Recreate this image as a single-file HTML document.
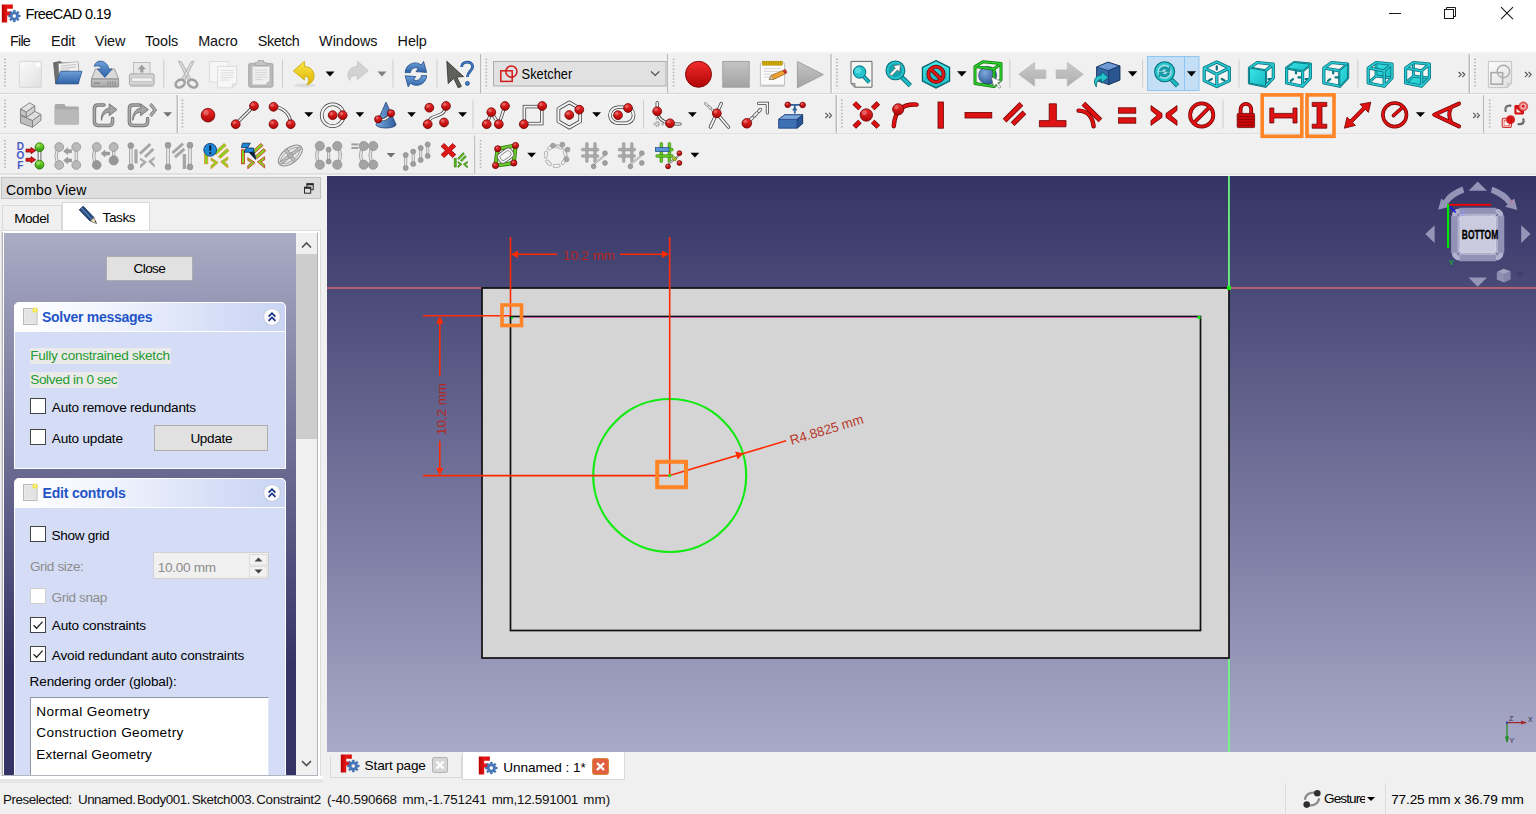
<!DOCTYPE html>
<html>
<head>
<meta charset="utf-8">
<title>FreeCAD 0.19</title>
<style>
*{box-sizing:border-box;margin:0;padding:0}
html,body{width:1536px;height:814px;overflow:hidden;background:#f0f0f0;font-family:"Liberation Sans",sans-serif;color:#000}
.abs{position:absolute}
#titlebar{position:absolute;left:0;top:0;width:1536px;height:28px;background:#fff}
#menubar{position:absolute;left:0;top:28px;width:1536px;height:25px;background:#fff}
.menu{position:absolute;top:4px;font-size:15px;line-height:17px;white-space:nowrap}
#toolbars{position:absolute;left:0;top:53px;width:1536px;height:123px;background:#f0f0f0}
.tbsep{position:absolute;width:1px;background:#c9c9c9}
.hsep{position:absolute;height:1px;background:#d4d4d4}
.handle{position:absolute;width:2px;height:30px;background:repeating-linear-gradient(to bottom,#b4b4b4 0,#b4b4b4 1px,transparent 1px,transparent 3px)}
.ic{position:absolute;width:32px;height:32px;overflow:visible}
.dd{position:absolute;width:0;height:0;border-left:4.5px solid transparent;border-right:4.5px solid transparent;border-top:5px solid #000}
.dd.g{border-top-color:#7f7f7f}
.chev{position:absolute;font-size:13px;color:#555;letter-spacing:-2px}
#viewport{position:absolute;left:327px;top:176px;width:1209px;height:576px;background:linear-gradient(to bottom,#333365 0%,#a9a9c9 100%);overflow:hidden}
#left{position:absolute;left:0;top:176px;width:323px;height:606px;background:#f0f0f0}
#status{position:absolute;left:0;top:783px;width:1536px;height:31px;background:#f0f0f0;font-size:14px}
.t{position:absolute;white-space:nowrap}
</style>
</head>
<body>
<svg width="0" height="0" style="position:absolute"><defs>
<linearGradient id="fcred" x1="0" y1="0" x2="1" y2="0"><stop offset="0" stop-color="#b80000"/><stop offset="0.5" stop-color="#e81818"/><stop offset="1" stop-color="#d40808"/></linearGradient>
<symbol id="fc" viewBox="0 0 20 20"><path d="M0.8,0.5 H11.8 V4.8 H6.2 V7.4 H10.2 V11.6 H6.2 V18.4 H0.8Z" fill="url(#fcred)"/><path fill-rule="evenodd" d="M19.31,10.95 L19.31,13.05 L17.56,13.09 L17.09,14.24 L18.29,15.51 L16.81,16.99 L15.54,15.79 L14.39,16.26 L14.35,18.01 L12.25,18.01 L12.21,16.26 L11.06,15.79 L9.79,16.99 L8.31,15.51 L9.51,14.24 L9.04,13.09 L7.29,13.05 L7.29,10.95 L9.04,10.91 L9.51,9.76 L8.31,8.49 L9.79,7.01 L11.06,8.21 L12.21,7.74 L12.25,5.99 L14.35,5.99 L14.39,7.74 L15.54,8.21 L16.81,7.01 L18.29,8.49 L17.09,9.76 L17.56,10.91Z M11.40,12.00 a1.90,1.90 0 1,0 3.80,0 a1.90,1.90 0 1,0 -3.80,0Z" fill="#4577bb" stroke="#2f5894" stroke-width="0.3"/></symbol>
</defs></svg>
<div id="titlebar"><svg class="abs" style="left:1px;top:3.9px" width="20" height="20"><use href="#fc"/></svg>
<div class="t" style="left:25.40px;top:6.75px;font-size:14.60px;line-height:14.60px;color:#000;letter-spacing:-0.659px;">FreeCAD 0.19</div>
<svg class="abs" style="left:1380px;top:0" width="156" height="28" viewBox="1380 0 156 28" fill="none" stroke="#1a1a1a" stroke-width="1">
<line x1="1389" y1="13.5" x2="1401" y2="13.5"/>
<path d="M1446.5,9.5 V7.5 H1455.5 V16.5 H1453.5"/><rect x="1444.5" y="9.5" width="9" height="9"/>
<path d="M1501,7.2 L1513,19.2 M1513,7.2 L1501,19.2" stroke-width="1.1"/>
</svg></div>
<div id="menubar" style="background:linear-gradient(to bottom,#fff 0,#fff 23px,#f4f4f4 25px)">
<div class="t" style="left:10.00px;top:5.85px;font-size:14.40px;line-height:14.40px;color:#111;letter-spacing:-0.776px;">File</div>
<div class="t" style="left:51.00px;top:5.85px;font-size:14.40px;line-height:14.40px;color:#111;letter-spacing:-0.203px;">Edit</div>
<div class="t" style="left:94.80px;top:5.85px;font-size:14.40px;line-height:14.40px;color:#111;letter-spacing:-0.138px;">View</div>
<div class="t" style="left:144.90px;top:5.85px;font-size:14.40px;line-height:14.40px;color:#111;letter-spacing:-0.063px;">Tools</div>
<div class="t" style="left:198.20px;top:5.85px;font-size:14.40px;line-height:14.40px;color:#111;letter-spacing:-0.081px;">Macro</div>
<div class="t" style="left:257.80px;top:5.85px;font-size:14.40px;line-height:14.40px;color:#111;letter-spacing:-0.420px;">Sketch</div>
<div class="t" style="left:319.10px;top:5.85px;font-size:14.40px;line-height:14.40px;color:#111;">Windows</div>
<div class="t" style="left:397.60px;top:5.85px;font-size:14.40px;line-height:14.40px;color:#111;letter-spacing:-0.104px;">Help</div>
</div>
<div id="toolbars"><svg class="abs" style="left:0;top:0" width="1536" height="123" viewBox="0 53 1536 123" font-family="Liberation Sans, sans-serif">
<defs>
<linearGradient id="gRed" x1="0" y1="0" x2="0" y2="1"><stop offset="0" stop-color="#f22c2c"/><stop offset="1" stop-color="#b00505"/></linearGradient>
<linearGradient id="gRedH" x1="0" y1="0" x2="1" y2="1"><stop offset="0" stop-color="#ee2222"/><stop offset="1" stop-color="#c00808"/></linearGradient>
<linearGradient id="gTeal" x1="0" y1="0" x2="0" y2="1"><stop offset="0" stop-color="#3fe6e8"/><stop offset="1" stop-color="#0aa3ad"/></linearGradient>
<linearGradient id="gTealF" x1="0" y1="0" x2="1" y2="1"><stop offset="0" stop-color="#3ae4e6"/><stop offset="1" stop-color="#17bcc4"/></linearGradient>
<linearGradient id="gGray" x1="0" y1="0" x2="0" y2="1"><stop offset="0" stop-color="#c4c4c4"/><stop offset="1" stop-color="#a3a3a3"/></linearGradient>
<linearGradient id="gPaper" x1="0" y1="0" x2="1" y2="1"><stop offset="0" stop-color="#fdfdfd"/><stop offset="1" stop-color="#dedede"/></linearGradient>
<linearGradient id="gBlue" x1="0" y1="0" x2="0" y2="1"><stop offset="0" stop-color="#6fa0d8"/><stop offset="1" stop-color="#2f63a8"/></linearGradient>
<linearGradient id="gBlueH" x1="0" y1="0" x2="1" y2="0"><stop offset="0" stop-color="#7aaae0"/><stop offset="1" stop-color="#2d5c9c"/></linearGradient>
<linearGradient id="gYel" x1="0" y1="0" x2="0" y2="1"><stop offset="0" stop-color="#fbe84c"/><stop offset="1" stop-color="#e0b400"/></linearGradient>
<linearGradient id="gGreen" x1="0" y1="0" x2="0" y2="1"><stop offset="0" stop-color="#8ae234"/><stop offset="1" stop-color="#2f9a0c"/></linearGradient>
<radialGradient id="gSph" cx="0.35" cy="0.35" r="0.8"><stop offset="0" stop-color="#7fa8dc"/><stop offset="1" stop-color="#1d4a8c"/></radialGradient>
</defs>
<rect x="0" y="93" width="1536" height="1" fill="#d6d6d6"/><rect x="0" y="94" width="1536" height="1" fill="#fafafa"/>
<rect x="0" y="133.4" width="1536" height="1" fill="#d6d6d6"/><rect x="0" y="134.4" width="1536" height="1" fill="#fafafa"/>
<rect x="0" y="173.6" width="1536" height="1" fill="#c8c8c8"/><rect x="0" y="174.6" width="1536" height="1.4" fill="#f6f6f6"/>
<rect x="480.0" y="54.0" width="1.4" height="39.0" fill="#b9b9b9"/><rect x="481.4" y="54.0" width="1" height="39.0" fill="#fbfbfb"/>
<rect x="667.0" y="54.0" width="1.4" height="39.0" fill="#b9b9b9"/><rect x="668.4" y="54.0" width="1" height="39.0" fill="#fbfbfb"/>
<rect x="830.4" y="54.0" width="1.4" height="39.0" fill="#b9b9b9"/><rect x="831.8" y="54.0" width="1" height="39.0" fill="#fbfbfb"/>
<rect x="1468.6" y="54.0" width="1.4" height="39.0" fill="#b9b9b9"/><rect x="1470.0" y="54.0" width="1" height="39.0" fill="#fbfbfb"/>
<line x1="5.0" y1="58.5" x2="5.0" y2="88.5" stroke="#b5b5b5" stroke-width="1.6" stroke-dasharray="1.5,1.8"/>
<line x1="486.3" y1="58.5" x2="486.3" y2="88.5" stroke="#b5b5b5" stroke-width="1.6" stroke-dasharray="1.5,1.8"/>
<line x1="673.5" y1="58.5" x2="673.5" y2="88.5" stroke="#b5b5b5" stroke-width="1.6" stroke-dasharray="1.5,1.8"/>
<line x1="837.0" y1="58.5" x2="837.0" y2="88.5" stroke="#b5b5b5" stroke-width="1.6" stroke-dasharray="1.5,1.8"/>
<line x1="1475.0" y1="58.5" x2="1475.0" y2="88.5" stroke="#b5b5b5" stroke-width="1.6" stroke-dasharray="1.5,1.8"/>
<rect x="163.3" y="59.5" width="1" height="28.0" fill="#cbcbcb"/>
<rect x="282.0" y="59.5" width="1" height="28.0" fill="#cbcbcb"/>
<rect x="392.5" y="59.5" width="1" height="28.0" fill="#cbcbcb"/>
<rect x="436.5" y="59.5" width="1" height="28.0" fill="#cbcbcb"/>
<rect x="1009.3" y="59.5" width="1" height="28.0" fill="#cbcbcb"/>
<rect x="1142.2" y="59.5" width="1" height="28.0" fill="#cbcbcb"/>
<rect x="1238.5" y="59.5" width="1" height="28.0" fill="#cbcbcb"/>
<rect x="1357.3" y="59.5" width="1" height="28.0" fill="#cbcbcb"/>
<rect x="176.6" y="95.0" width="1.4" height="38.0" fill="#b9b9b9"/><rect x="178.0" y="95.0" width="1" height="38.0" fill="#fbfbfb"/>
<rect x="835.6" y="95.0" width="1.4" height="38.0" fill="#b9b9b9"/><rect x="837.0" y="95.0" width="1" height="38.0" fill="#fbfbfb"/>
<rect x="1483.0" y="95.0" width="1.4" height="38.0" fill="#b9b9b9"/><rect x="1484.4" y="95.0" width="1" height="38.0" fill="#fbfbfb"/>
<line x1="5.0" y1="99.5" x2="5.0" y2="129.0" stroke="#b5b5b5" stroke-width="1.6" stroke-dasharray="1.5,1.8"/>
<line x1="182.5" y1="99.5" x2="182.5" y2="129.0" stroke="#b5b5b5" stroke-width="1.6" stroke-dasharray="1.5,1.8"/>
<line x1="841.8" y1="99.5" x2="841.8" y2="129.0" stroke="#b5b5b5" stroke-width="1.6" stroke-dasharray="1.5,1.8"/>
<line x1="1489.7" y1="99.5" x2="1489.7" y2="129.0" stroke="#b5b5b5" stroke-width="1.6" stroke-dasharray="1.5,1.8"/>
<rect x="472.5" y="100.5" width="1" height="28.0" fill="#cbcbcb"/>
<rect x="643.0" y="100.5" width="1" height="28.0" fill="#cbcbcb"/>
<rect x="1222.5" y="100.5" width="1" height="28.0" fill="#cbcbcb"/>
<rect x="474.2" y="135.5" width="1.4" height="38.0" fill="#b9b9b9"/><rect x="475.6" y="135.5" width="1" height="38.0" fill="#fbfbfb"/>
<rect x="475.6" y="135.5" width="1061" height="38" fill="#f0f0f0"/>
<line x1="5.0" y1="140.0" x2="5.0" y2="169.5" stroke="#b5b5b5" stroke-width="1.6" stroke-dasharray="1.5,1.8"/>
<line x1="480.5" y1="140.0" x2="480.5" y2="169.5" stroke="#b5b5b5" stroke-width="1.6" stroke-dasharray="1.5,1.8"/>
<polygon points="325.5,71.5 334.5,71.5 330.0,76.5" fill="#000"/>
<polygon points="377.5,71.5 386.5,71.5 382.0,76.5" fill="#808080"/>
<polygon points="957.0,71.3 966.6,71.3 961.8,76.4" fill="#000"/>
<polygon points="1128.0,71.3 1137.2,71.3 1132.6,76.4" fill="#000"/>
<polygon points="163.3,112.2 172.0,112.2 167.7,116.8" fill="#707070"/>
<polygon points="304.3,112.2 313.2,112.2 308.8,116.9" fill="#000"/>
<polygon points="355.6,112.2 364.2,112.2 359.9,116.9" fill="#000"/>
<polygon points="407.3,112.2 415.8,112.2 411.6,116.9" fill="#000"/>
<polygon points="458.2,112.2 467.0,112.2 462.6,116.9" fill="#000"/>
<polygon points="592.2,112.2 601.0,112.2 596.6,116.9" fill="#000"/>
<polygon points="688.0,112.2 696.7,112.2 692.4,116.9" fill="#000"/>
<polygon points="1415.8,112.2 1425.0,112.2 1420.4,117.1" fill="#000"/>
<polygon points="386.5,153.0 395.3,153.0 390.9,157.4" fill="#707070"/>
<polygon points="527.2,152.8 536.0,152.8 531.6,157.6" fill="#000"/>
<polygon points="690.5,152.8 699.3,152.8 694.9,157.6" fill="#000"/>
<path d="M1458.6,72.0 l2.6,2.6 l-2.6,2.6 M1462.2,72.0 l2.6,2.6 l-2.6,2.6" fill="none" stroke="#555" stroke-width="1.1"/>
<path d="M1525.0,72.0 l2.6,2.6 l-2.6,2.6 M1528.6,72.0 l2.6,2.6 l-2.6,2.6" fill="none" stroke="#555" stroke-width="1.1"/>
<path d="M825.4,112.8 l2.6,2.6 l-2.6,2.6 M829.0,112.8 l2.6,2.6 l-2.6,2.6" fill="none" stroke="#555" stroke-width="1.1"/>
<path d="M1473.2,112.8 l2.6,2.6 l-2.6,2.6 M1476.8,112.8 l2.6,2.6 l-2.6,2.6" fill="none" stroke="#555" stroke-width="1.1"/>
<rect x="1147.5" y="56.5" width="51.5" height="34" fill="#c4def5" stroke="#8fc5f2" stroke-width="1"/><line x1="1184.5" y1="57" x2="1184.5" y2="90" stroke="#8fc5f2"/>
<polygon points="1187.0,71.3 1196.0,71.3 1191.5,76.4" fill="#000"/>
<rect x="493.5" y="61.5" width="172.5" height="24.5" fill="#e1e1e1" stroke="#adadad"/>
<rect x="500.8" y="70.8" width="11.4" height="10.6" fill="none" stroke="#d31919" stroke-width="1.5"/><circle cx="511.4" cy="71.6" r="5.6" fill="none" stroke="#d31919" stroke-width="1.5"/>
<text x="521.6" y="79" font-size="14.2" textLength="50.6" lengthAdjust="spacingAndGlyphs" fill="#000">Sketcher</text>
<path d="M651,71.3 L655.2,75.5 L659.4,71.3" fill="none" stroke="#444" stroke-width="1.1"/><rect x="19.6" y="61.4" width="21.8" height="26" rx="1" fill="url(#gPaper)" stroke="#d2d2d2" stroke-width="0.9" opacity="0.9"/><circle cx="38" cy="65" r="2.6" fill="#fff" opacity="0.8"/>
<path d="M53.6,62.8 L60,61.4 L62,63 L78,63 L78.6,83.6 L55.6,83.6Z" fill="#6e6e6e" stroke="#4e4e4e" stroke-width="0.7"/>
<path d="M58.4,63.6 L78,61.6 L79.4,78 L59.4,79Z" fill="#f2f2f2" stroke="#9a9a9a" stroke-width="0.6"/><path d="M61,66 L76,64.6 M61,68.4 L76.4,67 M61.2,70.6 L70,70" stroke="#b4b4b4" stroke-width="0.8"/>
<path d="M60.6,71.4 L82,71.2 L78.2,83.8 L55.6,83.8Z" fill="url(#gBlue)" stroke="#2a5590" stroke-width="0.8"/>
<path d="M95.4,69 L114.6,69 L118.6,79 L91.4,79Z" fill="#d9d9d9" stroke="#8d8d8d" stroke-width="0.8"/><rect x="91.4" y="79" width="27.2" height="8" rx="1" fill="url(#gGray)" stroke="#7d7d7d" stroke-width="0.8"/><path d="M108,81 V85.4 M110.4,81 V85.4 M112.8,81 V85.4 M115.2,81 V85.4" stroke="#8a8a8a" stroke-width="0.9"/><rect x="94" y="82.4" width="6" height="1.4" fill="#8a8a8a"/>
<path d="M94.4,66.4 C94.6,61.8 100.4,59.6 104.4,62.2 C107.6,64.2 108.6,66.6 108.6,69 L112.2,69 L104.8,77.4 L97.4,69 L101.4,69 C101.2,66.6 98.4,65 94.4,66.4Z" fill="url(#gBlue)" stroke="#23508e" stroke-width="0.7"/>
<rect x="133.6" y="62.4" width="16.4" height="12" fill="#e8e8e8" stroke="#b2b2b2" stroke-width="0.8"/><path d="M141.8,64.8 L146,69.2 L143.4,69.2 L143.4,72.6 L140.2,72.6 L140.2,69.2 L137.6,69.2Z" fill="#9d9d9d"/>
<rect x="129.4" y="73.8" width="24.8" height="11.4" rx="1.6" fill="#d4d4d4" stroke="#9e9e9e" stroke-width="0.8"/><rect x="131.6" y="78" width="20.4" height="3.2" fill="#f4f4f4" stroke="#aaa" stroke-width="0.5"/><rect x="130" y="85.2" width="23.6" height="1.6" fill="#bdbdbd"/>
<path d="M178.4,61.2 L181.4,61.6 L191.6,80.4 L188.6,81.6Z M194.2,61.2 L191.2,61.6 L181,80.4 L184,81.6Z" fill="#d9d9d9" stroke="#a8a8a8" stroke-width="0.8"/>
<ellipse cx="180.2" cy="83.6" rx="4.8" ry="3.6" transform="rotate(-30 180.2 83.6)" fill="none" stroke="#a2a2a2" stroke-width="2.6"/><ellipse cx="192.6" cy="83.6" rx="4.8" ry="3.6" transform="rotate(30 192.6 83.6)" fill="none" stroke="#a2a2a2" stroke-width="2.6"/>
<g opacity="0.75"><rect x="209.4" y="61.4" width="18.8" height="20.6" fill="#f8f8f8" stroke="#cfcfcf" stroke-width="0.8"/><path d="M217.6,66.4 H236.6 V83.6 L232.4,87.8 H217.6Z" fill="#fafafa" stroke="#cdcdcd" stroke-width="0.8"/><path d="M220.4,70.4 H233.6 M220.4,72.8 H233.6 M220.4,75.2 H233.6 M220.4,77.6 H233.6 M220.4,80 H230" stroke="#d4d4d4" stroke-width="0.9"/><path d="M236.6,83.6 L232.4,83.6 L232.4,87.8Z" fill="#e2e2e2" stroke="#cdcdcd" stroke-width="0.6"/></g>
<rect x="248.6" y="63.4" width="24.4" height="23.8" rx="1.6" fill="#b9b9b9" stroke="#a0a0a0" stroke-width="0.8"/><rect x="252.4" y="66.6" width="17" height="18" fill="#f0f0f0" stroke="#cfcfcf" stroke-width="0.6"/><path d="M254.6,70 H267 M254.6,72.4 H267 M254.6,74.8 H267 M254.6,77.2 H267 M254.6,79.6 H263" stroke="#d2d2d2" stroke-width="0.9"/><path d="M255.2,65.6 V62.6 H258 V60.6 H263.6 V62.6 H266.4 V65.6Z" fill="#c6c6c6" stroke="#9e9e9e" stroke-width="0.7"/><path d="M269.4,80.6 L265.4,84.6 L269.4,84.6Z" fill="#b4b4b4"/>
<ellipse cx="305" cy="85.4" rx="11" ry="2" fill="#000" opacity="0.08"/>
<path d="M293.4,71 L304.4,61.2 L304.4,66.6 C311,66.6 314.6,71.6 314,77 C313.6,81 310.6,84 306.8,84.6 C309.8,81.4 309.6,76.4 304.4,76 L304.4,80Z" fill="url(#gYel)" stroke="#c4a000" stroke-width="0.8"/>
<path d="M368.2,70.6 L357.4,61.2 L357.4,66.4 C351,66.4 347.6,71 348,75.6 C348.2,78 349,79.4 350.2,80.4 C349.6,77 352.4,75.4 357.4,75.6 L357.4,79.6Z" fill="#cfcfcf" stroke="#bcbcbc" stroke-width="0.8" opacity="0.9"/>
<path d="M405.2,72.6 C405.4,65.4 412.4,61.4 418.6,63.4 L421.4,65 L423.6,61.4 L426.6,72.4 L416,71.6 L418.4,68.6 C414.6,66.6 410.8,68.6 410.4,72.6Z" fill="url(#gBlue)" stroke="#204a87" stroke-width="0.8"/>
<path d="M426.6,75.6 C426.4,82.8 419.4,86.8 413.2,84.8 L410.4,83.2 L408.2,86.8 L405.2,75.8 L415.8,76.6 L413.4,79.6 C417.2,81.6 421,79.6 421.4,75.6Z" fill="url(#gBlue)" stroke="#204a87" stroke-width="0.8"/>
<path d="M446.8,61.2 L463.6,76.6 L456.8,77 L461.4,86.4 L458.2,87.8 L453.8,78.4 L448.2,83.6Z" fill="#5f605c" stroke="#2e2f2c" stroke-width="0.8"/>
<path d="M461.6,67 C461.6,60.6 472.6,60.6 472.6,66.6 C472.6,71.4 467.4,71.4 467.4,77" fill="none" stroke="#1d4a8c" stroke-width="2.8"/><path d="M461.6,67 C461.6,60.6 472.6,60.6 472.6,66.6 C472.6,71.4 467.4,71.4 467.4,77" fill="none" stroke="#3f7ac4" stroke-width="1.5"/><circle cx="467.4" cy="83.4" r="2" fill="#3f7ac4" stroke="#1d4a8c" stroke-width="0.8"/>
<circle cx="698.5" cy="74.3" r="13" fill="url(#gRed)" stroke="#7a0000" stroke-width="0.9"/>
<rect x="722.8" y="61.4" width="26.4" height="25.8" fill="url(#gGray)" stroke="#9c9c9c" stroke-width="0.9"/>
<rect x="760.4" y="63" width="24.2" height="23" rx="1" fill="#fbfbfb" stroke="#b0b0b0" stroke-width="0.8"/><rect x="760.4" y="84.6" width="24.2" height="1.8" fill="#c8c8c8"/><rect x="762.4" y="61.2" width="20" height="4" fill="#d9b400" stroke="#a98900" stroke-width="0.5"/><path d="M764,61.2 V65 M766.4,61.2 V65 M768.8,61.2 V65 M771.2,61.2 V65 M773.6,61.2 V65 M776,61.2 V65 M778.4,61.2 V65 M780.8,61.2 V65" stroke="#8c7200" stroke-width="0.6"/><path d="M763.6,68.6 H781 M763.6,71.4 H781 M763.6,74.2 H776 M763.6,77 H772" stroke="#cfcfcf" stroke-width="0.9"/>
<path d="M769.2,79.4 L771.2,75.6 L783,70.4 L785.4,73.8 L773.6,79.4Z" fill="#f0a030" stroke="#8a5a10" stroke-width="0.7"/><path d="M783,70.4 L785.4,69.4 L787,72.6 L785.4,73.8Z" fill="#e03030" stroke="#801010" stroke-width="0.5"/><path d="M769.2,79.4 L771.2,75.6 L773.6,79.4Z" fill="#e8d0a0" stroke="#555" stroke-width="0.4"/>
<path d="M797.4,61.4 L823.4,74.6 L797.4,87.8Z" fill="url(#gGray)" stroke="#9c9c9c" stroke-width="0.9"/>
<path d="M851,61.4 H872 V87.2 H855 L851,83.4Z" fill="#f6f6f4" stroke="#555" stroke-width="0.9"/><path d="M851,83.4 L855,83.4 L855,87.2Z" fill="#bbb" stroke="#555" stroke-width="0.6"/>
<line x1="863.6" y1="76.4" x2="869.4" y2="82.4" stroke="#06707a" stroke-width="4"/><line x1="863.6" y1="76.4" x2="869.2" y2="82.2" stroke="#1fbcc6" stroke-width="2.2"/><circle cx="859.6" cy="72" r="6.2" fill="#25c3cd" stroke="#06707a" stroke-width="1"/><circle cx="858" cy="70.4" r="3" fill="#7ae8ee" opacity="0.6"/>
<line x1="901.6" y1="77" x2="910.4" y2="85.6" stroke="#06707a" stroke-width="4.6"/><line x1="901.6" y1="77" x2="910.2" y2="85.4" stroke="#1fbcc6" stroke-width="2.8"/><circle cx="895.4" cy="70.4" r="9.4" fill="#25c3cd" stroke="#06707a" stroke-width="1.1"/><circle cx="895.4" cy="70.4" r="6.8" fill="#16a4b0"/>
<path d="M900.4,64.6 L899.6,72.2 L897.4,70 L891.6,76 L889.6,74 L895.4,68 L893,65.8Z" fill="#fff" stroke="#444" stroke-width="0.6"/>
<path d="M936,60.6 L949.6,67.4 L949.6,81.2 L936,88 L922.4,81.2 L922.4,67.4Z" fill="url(#gTeal)" stroke="#06606a" stroke-width="1.2"/><path d="M936,63 L947.4,68.8 L947.4,79.8 L936,85.6 L924.6,79.8 L924.6,68.8Z" fill="none" stroke="#7df0f2" stroke-width="0.7" opacity="0.7"/>
<circle cx="936" cy="74.3" r="7.6" fill="none" stroke="#6a0000" stroke-width="3.8"/><line x1="930.6" y1="68.9" x2="941.4" y2="79.7" stroke="#6a0000" stroke-width="3.8"/><circle cx="936" cy="74.3" r="7.6" fill="none" stroke="#e01818" stroke-width="2.4"/><line x1="930.6" y1="68.9" x2="941.4" y2="79.7" stroke="#e01818" stroke-width="2.4"/>
<circle cx="987.6" cy="75.4" r="9" fill="url(#gSph)" stroke="#173c74" stroke-width="0.6"/>
<g fill="none" stroke-linejoin="round"><path d="M975,66.6 L994,69 L994,86.6 L975,83.4Z M975,66.6 L983,61.8 L1001,63.4 L994,69 M1001,63.4 L1001,79.6 L994,86.6" stroke="#0a7a0a" stroke-width="3"/><path d="M975,66.6 L994,69 L994,86.6 L975,83.4Z M975,66.6 L983,61.8 L1001,63.4 L994,69 M1001,63.4 L1001,79.6 L994,86.6" stroke="#2ed02e" stroke-width="1.5"/></g>
<path d="M991.4,77 L1001.4,81.6 L997.6,82.8 L1001,87 L999.2,88.2 L996,84 L993.6,86.8Z" fill="#fff" stroke="#666" stroke-width="0.6"/>
<path d="M1018.8,74.3 L1034.6,62.4 L1034.6,70 L1045.8,70 L1045.8,78.4 L1034.6,78.4 L1034.6,86.2Z" fill="url(#gGray)" stroke="#b0b0b0" stroke-width="0.8" opacity="0.85"/>
<path d="M1083.2,74.3 L1067.4,62.4 L1067.4,70 L1056.2,70 L1056.2,78.4 L1067.4,78.4 L1067.4,86.2Z" fill="url(#gGray)" stroke="#b0b0b0" stroke-width="0.8" opacity="0.85"/>
<path d="M1096.6,67 L1108,62.2 L1119.8,66 L1119.8,80 L1108.6,84.6 L1096.6,80.6Z" fill="#3465a4" stroke="#152f58" stroke-width="0.9"/><path d="M1096.6,67 L1108,62.2 L1119.8,66 L1108.6,70.6Z" fill="#6d9ad4" stroke="#152f58" stroke-width="0.7"/><path d="M1108.6,70.6 L1119.8,66 L1119.8,80 L1108.6,84.6Z" fill="#2a5590" stroke="#152f58" stroke-width="0.7"/>
<path d="M1096.4,87 C1092.6,81.8 1094.6,75.4 1101.4,75 L1101.4,71.6 L1108.4,77.4 L1101.4,83 L1101.4,79.4 C1098,79.6 1096,82.4 1096.4,87Z" fill="#25c3cd" stroke="#06606a" stroke-width="0.8"/>
<line x1="1171" y1="79" x2="1177.6" y2="85.8" stroke="#06707a" stroke-width="4.6"/><line x1="1171" y1="79" x2="1177.4" y2="85.6" stroke="#1fbcc6" stroke-width="2.8"/><circle cx="1164.6" cy="71.8" r="10" fill="#25c3cd" stroke="#06707a" stroke-width="1.1"/><circle cx="1164.6" cy="71.8" r="7.2" fill="#9fdfe6"/>
<path d="M1159.4,70.8 C1160,66.6 1166,65.4 1168.4,68.2 L1170,66.6 L1170,71.4 L1165.2,71.4 L1166.8,69.8 C1165.4,68.4 1162.4,68.8 1161.8,70.8Z M1169.8,72.8 C1169.2,77 1163.2,78.2 1160.8,75.4 L1159.2,77 L1159.2,72.2 L1164,72.2 L1162.4,73.8 C1163.8,75.2 1166.8,74.8 1167.4,72.8Z" fill="#12a0ac" stroke="#06707a" stroke-width="0.5"/>
<path d="M1216.8,62 L1229.4,68 L1229.4,80.6 L1216.8,86.6 L1204.2,80.6 L1204.2,68Z" fill="#f4f4f4"/>
<path d="M1216.8,62 L1229.4,68 L1229.4,80.6 L1216.8,86.6 L1204.2,80.6 L1204.2,68Z M1204.2,68 L1216.8,74.2 L1229.4,68 M1216.8,74.2 L1216.8,86.6" fill="none" stroke="#0a6f7a" stroke-width="3.2" stroke-linejoin="round" stroke-linecap="round"/><path d="M1216.8,62 L1229.4,68 L1229.4,80.6 L1216.8,86.6 L1204.2,80.6 L1204.2,68Z M1204.2,68 L1216.8,74.2 L1229.4,68 M1216.8,74.2 L1216.8,86.6" fill="none" stroke="#27c9d2" stroke-width="1.7" stroke-linejoin="round" stroke-linecap="round"/>
<g stroke="#0a6f7a" stroke-width="2.2" stroke-linecap="round"><line x1="1216.8" y1="66.4" x2="1216.8" y2="69.6"/><line x1="1209.2" y1="80.4" x2="1211.8" y2="79"/><line x1="1221.8" y1="79" x2="1224.4" y2="80.4"/></g>
<polygon points="1249.5,68.0 1257.3,62.5 1273.3,64.2 1273.3,78.0 1265.5,86.2 1249.5,83.0" fill="#f6f6f6"/><line x1="1268.5" y1="79.2" x2="1270.7" y2="79.2" stroke="#0a7884" stroke-width="2.2" stroke-linecap="round"/><path d="M1249.5,68.0 L1265.5,70.8 L1265.5,86.2 L1249.5,83.0 Z M1249.5,68.0 L1257.3,62.5 L1273.3,64.2 L1265.5,70.8 M1273.3,64.2 L1273.3,78.0 L1265.5,86.2" fill="none" stroke="#0a6f7a" stroke-width="3.2" stroke-linejoin="round" stroke-linecap="round"/><path d="M1249.5,68.0 L1265.5,70.8 L1265.5,86.2 L1249.5,83.0 Z M1249.5,68.0 L1257.3,62.5 L1273.3,64.2 L1265.5,70.8 M1273.3,64.2 L1273.3,78.0 L1265.5,86.2" fill="none" stroke="#27c9d2" stroke-width="1.7" stroke-linejoin="round" stroke-linecap="round"/><polygon points="1249.5,68.0 1265.5,70.8 1265.5,86.2 1249.5,83.0" fill="url(#gTealF)" stroke="#0a6f7a" stroke-width="0.9" stroke-linejoin="round"/>
<polygon points="1286.6,68.0 1294.4,62.5 1310.4,64.2 1310.4,78.0 1302.6,86.2 1286.6,83.0" fill="#f6f6f6"/><g stroke="#0a7884" stroke-width="2.2" stroke-linecap="round"><line x1="1296.0" y1="70.4" x2="1296.0" y2="73.4"/><line x1="1298.4" y1="77.4" x2="1300.8" y2="77.4"/><line x1="1293.0" y1="79.2" x2="1290.8" y2="80.8"/></g><line x1="1305.6" y1="79.2" x2="1307.6" y2="79.2" stroke="#0a7884" stroke-width="2.2" stroke-linecap="round"/><path d="M1286.6,68.0 L1302.6,70.8 L1302.6,86.2 L1286.6,83.0 Z M1286.6,68.0 L1294.4,62.5 L1310.4,64.2 L1302.6,70.8 M1310.4,64.2 L1310.4,78.0 L1302.6,86.2" fill="none" stroke="#0a6f7a" stroke-width="3.2" stroke-linejoin="round" stroke-linecap="round"/><path d="M1286.6,68.0 L1302.6,70.8 L1302.6,86.2 L1286.6,83.0 Z M1286.6,68.0 L1294.4,62.5 L1310.4,64.2 L1302.6,70.8 M1310.4,64.2 L1310.4,78.0 L1302.6,86.2" fill="none" stroke="#27c9d2" stroke-width="1.7" stroke-linejoin="round" stroke-linecap="round"/><polygon points="1286.6,68.0 1294.4,62.5 1310.4,64.2 1302.6,70.8" fill="url(#gTealF)" stroke="#0a6f7a" stroke-width="0.9" stroke-linejoin="round"/>
<polygon points="1323.8,68.0 1331.6,62.5 1347.6,64.2 1347.6,78.0 1339.8,86.2 1323.8,83.0" fill="#f6f6f6"/><g stroke="#0a7884" stroke-width="2.2" stroke-linecap="round"><line x1="1333.2" y1="70.4" x2="1333.2" y2="73.4"/><line x1="1335.6" y1="77.4" x2="1338.0" y2="77.4"/><line x1="1330.2" y1="79.2" x2="1328.0" y2="80.8"/></g><line x1="1342.8" y1="79.2" x2="1344.8" y2="79.2" stroke="#0a7884" stroke-width="2.2" stroke-linecap="round"/><path d="M1323.8,68.0 L1339.8,70.8 L1339.8,86.2 L1323.8,83.0 Z M1323.8,68.0 L1331.6,62.5 L1347.6,64.2 L1339.8,70.8 M1347.6,64.2 L1347.6,78.0 L1339.8,86.2" fill="none" stroke="#0a6f7a" stroke-width="3.2" stroke-linejoin="round" stroke-linecap="round"/><path d="M1323.8,68.0 L1339.8,70.8 L1339.8,86.2 L1323.8,83.0 Z M1323.8,68.0 L1331.6,62.5 L1347.6,64.2 L1339.8,70.8 M1347.6,64.2 L1347.6,78.0 L1339.8,86.2" fill="none" stroke="#27c9d2" stroke-width="1.7" stroke-linejoin="round" stroke-linecap="round"/><polygon points="1339.8,70.8 1347.6,64.2 1347.6,78.0 1339.8,86.2" fill="url(#gTealF)" stroke="#0a6f7a" stroke-width="0.9" stroke-linejoin="round"/>
<polygon points="1368.2,68.0 1376.0,62.5 1392.0,64.2 1392.0,78.0 1384.2,86.2 1368.2,83.0" fill="#f6f6f6"/><polygon points="1376.0,62.5 1392.0,64.2 1392.0,78.0 1376.0,76.0" fill="url(#gTealF)" stroke="#0a6f7a" stroke-width="0.6"/><path d="M1376.0,76.0 L1376.0,63.5 M1376.0,76.0 L1391.0,78.0 M1376.0,76.0 L1368.8,82.4" fill="none" stroke="#0a6f7a" stroke-width="2.8" stroke-linejoin="round" stroke-linecap="round"/><path d="M1376.0,76.0 L1376.0,63.5 M1376.0,76.0 L1391.0,78.0 M1376.0,76.0 L1368.8,82.4" fill="none" stroke="#27c9d2" stroke-width="1.3" stroke-linejoin="round" stroke-linecap="round"/><path d="M1368.2,68.0 L1384.2,70.8 L1384.2,86.2 L1368.2,83.0 Z M1368.2,68.0 L1376.0,62.5 L1392.0,64.2 L1384.2,70.8 M1392.0,64.2 L1392.0,78.0 L1384.2,86.2" fill="none" stroke="#0a6f7a" stroke-width="3.2" stroke-linejoin="round" stroke-linecap="round"/><path d="M1368.2,68.0 L1384.2,70.8 L1384.2,86.2 L1368.2,83.0 Z M1368.2,68.0 L1376.0,62.5 L1392.0,64.2 L1384.2,70.8 M1392.0,64.2 L1392.0,78.0 L1384.2,86.2" fill="none" stroke="#27c9d2" stroke-width="1.7" stroke-linejoin="round" stroke-linecap="round"/>
<polygon points="1405.6,68.0 1413.4,62.5 1429.4,64.2 1429.4,78.0 1421.6,86.2 1405.6,83.0" fill="#f6f6f6"/><polygon points="1405.6,83.0 1421.6,86.2 1429.4,78.0 1413.4,76.0" fill="url(#gTealF)" stroke="#0a6f7a" stroke-width="0.6"/><path d="M1413.4,76.0 L1413.4,63.5 M1413.4,76.0 L1428.4,78.0 M1413.4,76.0 L1406.2,82.4" fill="none" stroke="#0a6f7a" stroke-width="2.8" stroke-linejoin="round" stroke-linecap="round"/><path d="M1413.4,76.0 L1413.4,63.5 M1413.4,76.0 L1428.4,78.0 M1413.4,76.0 L1406.2,82.4" fill="none" stroke="#27c9d2" stroke-width="1.3" stroke-linejoin="round" stroke-linecap="round"/><path d="M1405.6,68.0 L1421.6,70.8 L1421.6,86.2 L1405.6,83.0 Z M1405.6,68.0 L1413.4,62.5 L1429.4,64.2 L1421.6,70.8 M1429.4,64.2 L1429.4,78.0 L1421.6,86.2" fill="none" stroke="#0a6f7a" stroke-width="3.2" stroke-linejoin="round" stroke-linecap="round"/><path d="M1405.6,68.0 L1421.6,70.8 L1421.6,86.2 L1405.6,83.0 Z M1405.6,68.0 L1413.4,62.5 L1429.4,64.2 L1421.6,70.8 M1429.4,64.2 L1429.4,78.0 L1421.6,86.2" fill="none" stroke="#27c9d2" stroke-width="1.7" stroke-linejoin="round" stroke-linecap="round"/>
<path d="M1488.4,61.4 H1511.6 V83.4 L1507.4,87.6 H1488.4Z" fill="url(#gPaper)" stroke="#bdbdbd" stroke-width="0.9"/><path d="M1511.6,83.4 L1507.4,83.4 L1507.4,87.6Z" fill="#d6d6d6" stroke="#bdbdbd" stroke-width="0.6"/><rect x="1491" y="72.6" width="11.6" height="11.6" fill="none" stroke="#ababab" stroke-width="1.6"/><circle cx="1503.4" cy="71.4" r="6.2" fill="none" stroke="#ababab" stroke-width="1.4"/><g stroke="#7e7e7e" stroke-width="0.9" stroke-linejoin="round"><path d="M20.5,109 L29.6,102.8 L34.8,105.9 L26.3,112.1Z" fill="#e2e2e2"/><path d="M20.5,109 L26.3,112.1 L26.3,117.6 L20.5,114.8Z" fill="#c4c4c4"/><path d="M26.3,112.1 L34.8,105.9 L34.8,111.4 L26.3,117.6Z" fill="#d2d2d2"/><path d="M20.5,114.8 L26.3,117.6 L34.8,111.4 L40.9,114.4 L32.5,120.6 L20.5,116Z" fill="#dedede"/><path d="M20.5,115.4 L32.5,120.6 L32.5,127.3 L20.5,122.9Z" fill="#bebebe"/><path d="M32.5,120.6 L40.9,114.4 L40.9,120.4 L32.5,127.3Z" fill="#cfcfcf"/></g>
<path d="M54.6,105.6 Q54.6,104.1 56,104.1 L64.4,104.1 L65.8,106.4 L77.4,106.4 Q78.8,106.4 78.8,107.8 L78.8,123.2 Q78.8,124.6 77.4,124.6 L56,124.6 Q54.6,124.6 54.6,123.2Z" fill="#a9a9a9"/><path d="M54.6,109.6 L78.8,109.6 L78.8,123.2 Q78.8,124.6 77.4,124.6 L56,124.6 Q54.6,124.6 54.6,123.2Z" fill="#b9b9b9"/>
<path d="M104.0,105 H98.0 Q94.4,105 94.4,108.6 V121.8 Q94.4,125.4 98.0,125.4 H109.0 Q112.6,125.4 112.6,121.8 V118.6" fill="none" stroke="#767676" stroke-width="3.5" stroke-linecap="round"/><path d="M104.0,105 H98.0 Q94.4,105 94.4,108.6 V121.8 Q94.4,125.4 98.0,125.4 H109.0 Q112.6,125.4 112.6,121.8 V118.6" fill="none" stroke="#ababab" stroke-width="1.7" stroke-linecap="round"/><path d="M101.4,120.4 C100.8,113.6 104.4,108.6 109.2,108.2 L109.2,103.8 L117.0,109.6 L109.2,115.8 L109.2,112.2 C105.2,112.4 102.8,114.6 101.4,120.4Z" fill="#a2a2a2" stroke="#727272" stroke-width="0.9"/>
<path d="M139.0,105 H133.0 Q129.4,105 129.4,108.6 V121.8 Q129.4,125.4 133.0,125.4 H144.0 Q147.6,125.4 147.6,121.8 V118.6" fill="none" stroke="#767676" stroke-width="3.5" stroke-linecap="round"/><path d="M139.0,105 H133.0 Q129.4,105 129.4,108.6 V121.8 Q129.4,125.4 133.0,125.4 H144.0 Q147.6,125.4 147.6,121.8 V118.6" fill="none" stroke="#ababab" stroke-width="1.7" stroke-linecap="round"/><path d="M132.8,120.4 C132.2,113.6 135.8,108.6 140.6,108.2 L140.6,103.8 L148.4,109.6 L140.6,115.8 L140.6,112.2 C136.6,112.4 134.2,114.6 132.8,120.4Z" fill="#a2a2a2" stroke="#727272" stroke-width="0.9"/>
<path d="M150.4,104 L155,110 L150.4,116" fill="none" stroke="#767676" stroke-width="3.2"/><path d="M150.4,104 L155,110 L150.4,116" fill="none" stroke="#b4b4b4" stroke-width="1.4"/>
<circle cx="208.0" cy="115.2" r="6.8" fill="url(#gRed)" stroke="#6a0000" stroke-width="0.8"/><circle cx="206.0" cy="112.8" r="2.7" fill="#fff" fill-opacity="0.28"/>
<path d="M235.7,124.2 L254,106" fill="none" stroke="#3c3c3c" stroke-width="3.2" stroke-linecap="round"/><path d="M235.7,124.2 L254,106" fill="none" stroke="#f4f4f4" stroke-width="1.7" stroke-linecap="round"/>
<circle cx="235.7" cy="124.2" r="4.4" fill="url(#gRed)" stroke="#6a0000" stroke-width="0.8"/><circle cx="234.4" cy="122.7" r="1.8" fill="#fff" fill-opacity="0.28"/>
<circle cx="254.0" cy="106.0" r="4.4" fill="url(#gRed)" stroke="#6a0000" stroke-width="0.8"/><circle cx="252.7" cy="104.5" r="1.8" fill="#fff" fill-opacity="0.28"/>
<path d="M273.5,106.8 A17.3,17.3 0 0 1 290.7,124.2" fill="none" stroke="#3c3c3c" stroke-width="3.2" stroke-linecap="round"/><path d="M273.5,106.8 A17.3,17.3 0 0 1 290.7,124.2" fill="none" stroke="#f4f4f4" stroke-width="1.7" stroke-linecap="round"/>
<circle cx="273.5" cy="106.8" r="4.4" fill="url(#gRed)" stroke="#6a0000" stroke-width="0.8"/><circle cx="272.2" cy="105.3" r="1.8" fill="#fff" fill-opacity="0.28"/>
<circle cx="273.5" cy="124.2" r="4.4" fill="url(#gRed)" stroke="#6a0000" stroke-width="0.8"/><circle cx="272.2" cy="122.7" r="1.8" fill="#fff" fill-opacity="0.28"/>
<circle cx="290.7" cy="124.2" r="4.4" fill="url(#gRed)" stroke="#6a0000" stroke-width="0.8"/><circle cx="289.4" cy="122.7" r="1.8" fill="#fff" fill-opacity="0.28"/>
<circle cx="332.7" cy="115.2" r="11" fill="none" stroke="#3c3c3c" stroke-width="3.6"/><circle cx="332.7" cy="115.2" r="11" fill="none" stroke="#f4f4f4" stroke-width="2.1"/>
<circle cx="332.7" cy="115.2" r="4.4" fill="url(#gRed)" stroke="#6a0000" stroke-width="0.8"/><circle cx="331.4" cy="113.7" r="1.8" fill="#fff" fill-opacity="0.28"/>
<circle cx="342.7" cy="115.2" r="4.4" fill="url(#gRed)" stroke="#6a0000" stroke-width="0.8"/><circle cx="341.4" cy="113.7" r="1.8" fill="#fff" fill-opacity="0.28"/>
<path d="M386,102.2 L396,124.4 A10,3.6 0 0 1 376,124.4Z" fill="url(#gBlueH)" stroke="#1c3e70" stroke-width="0.8"/>
<path d="M378.2,119.3 Q386,121.6 391,113.3" fill="none" stroke="#3c3c3c" stroke-width="3.0" stroke-linecap="round"/><path d="M378.2,119.3 Q386,121.6 391,113.3" fill="none" stroke="#f4f4f4" stroke-width="1.5" stroke-linecap="round"/>
<circle cx="378.2" cy="119.3" r="3.6" fill="url(#gRed)" stroke="#6a0000" stroke-width="0.8"/><circle cx="377.1" cy="118.0" r="1.4" fill="#fff" fill-opacity="0.28"/>
<circle cx="391.0" cy="113.3" r="3.6" fill="url(#gRed)" stroke="#6a0000" stroke-width="0.8"/><circle cx="389.9" cy="112.0" r="1.4" fill="#fff" fill-opacity="0.28"/>
<path d="M427.7,124.2 C430,112 444,120 446,106" fill="none" stroke="#3c3c3c" stroke-width="3.2" stroke-linecap="round"/><path d="M427.7,124.2 C430,112 444,120 446,106" fill="none" stroke="#f4f4f4" stroke-width="1.7" stroke-linecap="round"/>
<circle cx="429.3" cy="107.7" r="4.4" fill="url(#gRed)" stroke="#6a0000" stroke-width="0.8"/><circle cx="428.0" cy="106.2" r="1.8" fill="#fff" fill-opacity="0.28"/>
<circle cx="446.0" cy="106.0" r="4.4" fill="url(#gRed)" stroke="#6a0000" stroke-width="0.8"/><circle cx="444.7" cy="104.5" r="1.8" fill="#fff" fill-opacity="0.28"/>
<circle cx="427.7" cy="124.2" r="4.4" fill="url(#gRed)" stroke="#6a0000" stroke-width="0.8"/><circle cx="426.4" cy="122.7" r="1.8" fill="#fff" fill-opacity="0.28"/>
<circle cx="444.0" cy="122.5" r="4.4" fill="url(#gRed)" stroke="#6a0000" stroke-width="0.8"/><circle cx="442.7" cy="121.0" r="1.8" fill="#fff" fill-opacity="0.28"/>
<path d="M486.7,124.2 L491.3,112.2 L498.8,124.2 L505,106" fill="none" stroke="#3c3c3c" stroke-width="3.2" stroke-linecap="round"/><path d="M486.7,124.2 L491.3,112.2 L498.8,124.2 L505,106" fill="none" stroke="#f4f4f4" stroke-width="1.7" stroke-linecap="round"/>
<circle cx="486.7" cy="124.2" r="4.4" fill="url(#gRed)" stroke="#6a0000" stroke-width="0.8"/><circle cx="485.4" cy="122.7" r="1.8" fill="#fff" fill-opacity="0.28"/>
<circle cx="491.3" cy="112.2" r="4.4" fill="url(#gRed)" stroke="#6a0000" stroke-width="0.8"/><circle cx="490.0" cy="110.7" r="1.8" fill="#fff" fill-opacity="0.28"/>
<circle cx="498.8" cy="124.2" r="4.4" fill="url(#gRed)" stroke="#6a0000" stroke-width="0.8"/><circle cx="497.5" cy="122.7" r="1.8" fill="#fff" fill-opacity="0.28"/>
<circle cx="505.0" cy="106.0" r="4.4" fill="url(#gRed)" stroke="#6a0000" stroke-width="0.8"/><circle cx="503.7" cy="104.5" r="1.8" fill="#fff" fill-opacity="0.28"/>
<rect x="524.4" y="106.6" width="17.4" height="17" fill="none" stroke="#3c3c3c" stroke-width="3.4"/><rect x="524.4" y="106.6" width="17.4" height="17" fill="none" stroke="#f4f4f4" stroke-width="1.9"/>
<circle cx="523.8" cy="124.2" r="4.4" fill="url(#gRed)" stroke="#6a0000" stroke-width="0.8"/><circle cx="522.5" cy="122.7" r="1.8" fill="#fff" fill-opacity="0.28"/>
<circle cx="542.2" cy="106.0" r="4.4" fill="url(#gRed)" stroke="#6a0000" stroke-width="0.8"/><circle cx="540.9" cy="104.5" r="1.8" fill="#fff" fill-opacity="0.28"/>
<polygon points="569.3,102.4 580.2,108.7 580.2,121.3 569.3,127.6 558.4,121.3 558.4,108.7" fill="none" stroke="#3c3c3c" stroke-width="3.6" stroke-linejoin="round"/><polygon points="569.3,102.4 580.2,108.7 580.2,121.3 569.3,127.6 558.4,121.3 558.4,108.7" fill="none" stroke="#f4f4f4" stroke-width="2.1" stroke-linejoin="round"/>
<circle cx="569.3" cy="115.0" r="4.4" fill="url(#gRed)" stroke="#6a0000" stroke-width="0.8"/><circle cx="568.0" cy="113.5" r="1.8" fill="#fff" fill-opacity="0.28"/>
<circle cx="579.3" cy="109.7" r="4.4" fill="url(#gRed)" stroke="#6a0000" stroke-width="0.8"/><circle cx="578.0" cy="108.2" r="1.8" fill="#fff" fill-opacity="0.28"/>
<rect x="610" y="107.2" width="23.6" height="16" rx="8" fill="none" stroke="#3c3c3c" stroke-width="3.6"/><rect x="610" y="107.2" width="23.6" height="16" rx="8" fill="none" stroke="#f4f4f4" stroke-width="2.1"/>
<circle cx="618.0" cy="115.2" r="4.4" fill="url(#gRed)" stroke="#6a0000" stroke-width="0.8"/><circle cx="616.7" cy="113.7" r="1.8" fill="#fff" fill-opacity="0.28"/>
<circle cx="628.0" cy="108.0" r="4.4" fill="url(#gRed)" stroke="#6a0000" stroke-width="0.8"/><circle cx="626.7" cy="106.5" r="1.8" fill="#fff" fill-opacity="0.28"/>
<path d="M657.2,113 V127 M653.6,124 H668" fill="none" stroke="#8a8a8a" stroke-width="2.6" stroke-dasharray="2.4,1.6"/><path d="M657.2,113 V127 M653.6,124 H668" fill="none" stroke="#e8e8e8" stroke-width="1.2" stroke-dasharray="2.4,1.6"/>
<path d="M657.2,102.6 V111 M670,124 H680" fill="none" stroke="#3c3c3c" stroke-width="3.2" stroke-linecap="round"/><path d="M657.2,102.6 V111 M670,124 H680" fill="none" stroke="#f4f4f4" stroke-width="1.7" stroke-linecap="round"/>
<path d="M657.2,111.3 Q658.6,121.6 670,123.3" fill="none" stroke="#3c3c3c" stroke-width="3.0" stroke-linecap="round"/><path d="M657.2,111.3 Q658.6,121.6 670,123.3" fill="none" stroke="#f4f4f4" stroke-width="1.5" stroke-linecap="round"/>
<circle cx="657.2" cy="111.3" r="4.4" fill="url(#gRed)" stroke="#6a0000" stroke-width="0.8"/><circle cx="655.9" cy="109.8" r="1.8" fill="#fff" fill-opacity="0.28"/>
<circle cx="670.0" cy="123.3" r="4.4" fill="url(#gRed)" stroke="#6a0000" stroke-width="0.8"/><circle cx="668.7" cy="121.8" r="1.8" fill="#fff" fill-opacity="0.28"/>
<path d="M705.4,103.4 L714,111.6" fill="none" stroke="#8a8a8a" stroke-width="2.8" stroke-dasharray="2.6,2" stroke-linecap="round"/><path d="M705.4,103.4 L714,111.6" fill="none" stroke="#ececec" stroke-width="1.3" stroke-dasharray="2.6,2" stroke-linecap="round"/>
<path d="M721.2,103.6 L710.4,127 M717,113.6 L728.4,127" fill="none" stroke="#3c3c3c" stroke-width="3.4" stroke-linecap="round"/><path d="M721.2,103.6 L710.4,127 M717,113.6 L728.4,127" fill="none" stroke="#f4f4f4" stroke-width="1.9" stroke-linecap="round"/>
<circle cx="716.8" cy="113.3" r="4.4" fill="url(#gRed)" stroke="#6a0000" stroke-width="0.8"/><circle cx="715.5" cy="111.8" r="1.8" fill="#fff" fill-opacity="0.28"/>
<path d="M749.6,120.6 L760.4,109.6" fill="none" stroke="#555" stroke-width="3.6" stroke-dasharray="4,2.6" stroke-linecap="round"/><path d="M749.6,120.6 L760.4,109.6" fill="none" stroke="#f2f2f2" stroke-width="2" stroke-dasharray="4,2.6" stroke-linecap="round"/>
<path d="M758.6,103.4 H767.4 V112.8" fill="none" stroke="#3c3c3c" stroke-width="3.2" stroke-linecap="round"/><path d="M758.6,103.4 H767.4 V112.8" fill="none" stroke="#f4f4f4" stroke-width="1.7" stroke-linecap="round"/>
<circle cx="746.8" cy="123.3" r="4.8" fill="url(#gRed)" stroke="#6a0000" stroke-width="0.8"/><circle cx="745.4" cy="121.6" r="1.9" fill="#fff" fill-opacity="0.28"/>
<path d="M778.6,119.4 L784.6,114.8 L802.6,114.8 L802.6,123.6 L797,128.2 L778.6,128.2Z" fill="#3d6fb4" stroke="#173c74" stroke-width="0.8"/><path d="M778.6,119.4 L784.6,114.8 L802.6,114.8 L797,119.4Z" fill="#7ba6dc" stroke="#173c74" stroke-width="0.7"/><path d="M797,119.4 L802.6,114.8 L802.6,123.6 L797,128.2Z" fill="#2a5590" stroke="#173c74" stroke-width="0.7"/>
<path d="M789,104.8 H801 M794.8,105 V110 M793,110.6 L794.8,108 L796.6,110.6 M794.8,110.6 V113.6" fill="none" stroke="#2f5f9f" stroke-width="1.8"/>
<circle cx="787.7" cy="104.8" r="2.8" fill="url(#gRed)" stroke="#6a0000" stroke-width="0.8"/><circle cx="786.9" cy="103.8" r="1.1" fill="#fff" fill-opacity="0.28"/>
<circle cx="802.6" cy="105.0" r="2.8" fill="url(#gRed)" stroke="#6a0000" stroke-width="0.8"/><circle cx="801.8" cy="104.0" r="1.1" fill="#fff" fill-opacity="0.28"/>
<line x1="872.7" y1="121.4" x2="878.3" y2="127.0" stroke="#6e0000" stroke-width="5.0"/><line x1="872.8" y1="121.5" x2="878.2" y2="126.9" stroke="#de1212" stroke-width="3.6"/>
<line x1="872.7" y1="108.6" x2="878.3" y2="103.0" stroke="#6e0000" stroke-width="5.0"/><line x1="872.8" y1="108.5" x2="878.2" y2="103.1" stroke="#de1212" stroke-width="3.6"/>
<line x1="859.9" y1="121.4" x2="854.3" y2="127.0" stroke="#6e0000" stroke-width="5.0"/><line x1="859.8" y1="121.5" x2="854.4" y2="126.9" stroke="#de1212" stroke-width="3.6"/>
<line x1="859.9" y1="108.6" x2="854.3" y2="103.0" stroke="#6e0000" stroke-width="5.0"/><line x1="859.8" y1="108.5" x2="854.4" y2="103.1" stroke="#de1212" stroke-width="3.6"/>
<circle cx="866.3" cy="115.0" r="6.2" fill="url(#gRed)" stroke="#6a0000" stroke-width="0.8"/><circle cx="864.4" cy="112.8" r="2.5" fill="#fff" fill-opacity="0.28"/>
<path d="M916.6,104.6 C902,103.6 894.6,111 893.8,126.2" fill="none" stroke="#6e0000" stroke-width="4.4" stroke-linecap="round"/><path d="M916.6,104.6 C902,103.6 894.6,111 893.8,126.2" fill="none" stroke="#de1212" stroke-width="3" stroke-linecap="round"/>
<circle cx="898.2" cy="109.3" r="5.6" fill="url(#gRed)" stroke="#6a0000" stroke-width="0.8"/><circle cx="896.5" cy="107.3" r="2.2" fill="#fff" fill-opacity="0.28"/>
<rect x="938.0" y="102.0" width="5.4" height="26.2" fill="#de1212" stroke="#6e0000" stroke-width="0.8"/>
<rect x="965.0" y="112.4" width="26.8" height="5.6" fill="#de1212" stroke="#6e0000" stroke-width="0.8"/>
<line x1="1004.6" y1="120.6" x2="1021.4" y2="103.8" stroke="#6e0000" stroke-width="5.2"/><line x1="1004.9" y1="120.3" x2="1021.1" y2="104.1" stroke="#de1212" stroke-width="3.8"/>
<line x1="1012.6" y1="124.2" x2="1024.4" y2="112.4" stroke="#6e0000" stroke-width="5.2"/><line x1="1012.8" y1="124.0" x2="1024.2" y2="112.6" stroke="#de1212" stroke-width="3.8"/>
<path d="M1049.2,103.8 H1056.4 V120.6 H1066 V126.8 H1039.4 V120.6 H1049.2Z" fill="#de1212" stroke="#6e0000" stroke-width="0.8"/>
<line x1="1083.4" y1="103.6" x2="1100.4" y2="120.4" stroke="#6e0000" stroke-width="5.2"/><line x1="1083.7" y1="103.9" x2="1100.1" y2="120.1" stroke="#de1212" stroke-width="3.8"/>
<path d="M1078.6,110.6 C1088,110.8 1092.6,117.6 1093.6,126.2" fill="none" stroke="#6e0000" stroke-width="4.4" stroke-linecap="round"/><path d="M1078.6,110.6 C1088,110.8 1092.6,117.6 1093.6,126.2" fill="none" stroke="#de1212" stroke-width="3" stroke-linecap="round"/>
<rect x="1118.4" y="107.8" width="17.4" height="5.4" fill="#de1212" stroke="#6e0000" stroke-width="0.8"/>
<rect x="1118.4" y="117.8" width="17.4" height="5.4" fill="#de1212" stroke="#6e0000" stroke-width="0.8"/>
<path d="M1151,105.6 L1162,113.4 L1162,117.4 L1151,125.4 L1151,120.6 L1157,115.4 L1151,110.4Z" fill="#de1212" stroke="#6e0000" stroke-width="0.8"/><path d="M1177,105.6 L1166,113.4 L1166,117.4 L1177,125.4 L1177,120.6 L1171,115.4 L1177,110.4Z" fill="#de1212" stroke="#6e0000" stroke-width="0.8"/>
<circle cx="1201.7" cy="115" r="11.6" fill="none" stroke="#6e0000" stroke-width="3.8"/><line x1="1193.6" y1="123.2" x2="1209.8" y2="106.8" stroke="#6e0000" stroke-width="3.8"/><circle cx="1201.7" cy="115" r="11.6" fill="none" stroke="#de1212" stroke-width="2.4"/><line x1="1193.6" y1="123.2" x2="1209.8" y2="106.8" stroke="#de1212" stroke-width="2.4"/>
<path d="M1240.6,113.4 V109.6 A5.3,5.8 0 0 1 1251.2,109.6 V113.4" fill="none" stroke="#6e0000" stroke-width="3.8"/><path d="M1240.6,113.4 V109.6 A5.3,5.8 0 0 1 1251.2,109.6 V113.4" fill="none" stroke="#de1212" stroke-width="2.3"/>
<rect x="1237.2" y="113.4" width="17.4" height="14.2" rx="1" fill="#cc0808" stroke="#6e0000" stroke-width="0.8"/><path d="M1238,116.6 H1254 M1238,119.4 H1254 M1238,122.2 H1254 M1238,125 H1254" stroke="#8e0000" stroke-width="0.9"/>
<path d="M1269.8,108 H1273.8 V113.4 H1293 V108 H1297 V123 H1293 V118 H1273.8 V123 H1269.8Z" fill="#de1212" stroke="#6e0000" stroke-width="0.8"/>
<path d="M1312.2,102.4 H1326.8 V106.4 H1322 V124.2 H1326.8 V128.2 H1312.2 V124.2 H1317 V106.4 H1312.2Z" fill="#de1212" stroke="#6e0000" stroke-width="0.8"/>
<path d="M1370.8,102.2 L1368.4,112.4 L1365.4,109.4 L1352.6,122.4 L1355.4,125.4 L1344.4,128.2 L1347,117.2 L1350,120 L1362.8,107 L1360,104.2Z" fill="#de1212" stroke="#6e0000" stroke-width="0.8"/>
<circle cx="1394.7" cy="114.8" r="11.8" fill="none" stroke="#6e0000" stroke-width="3.6"/><line x1="1393.4" y1="115.6" x2="1403" y2="107" stroke="#6e0000" stroke-width="3.6" stroke-linecap="round"/><circle cx="1394.7" cy="114.8" r="11.8" fill="none" stroke="#de1212" stroke-width="2.2"/><line x1="1393.4" y1="115.6" x2="1403" y2="107" stroke="#de1212" stroke-width="2.2" stroke-linecap="round"/>
<path d="M1459,103.6 L1434.2,114.8 L1459,126.4 M1451,107.4 Q1447.4,115 1451.4,122.6" fill="none" stroke="#6e0000" stroke-width="4" stroke-linecap="round" stroke-linejoin="round"/><path d="M1459,103.6 L1434.2,114.8 L1459,126.4 M1451,107.4 Q1447.4,115 1451.4,122.6" fill="none" stroke="#de1212" stroke-width="2.6" stroke-linecap="round" stroke-linejoin="round"/>
<rect x="1514.4" y="105" width="9.6" height="9.4" rx="1.4" fill="#d40a0a"/><path d="M1516.4,108.6 L1521.4,112.6 L1516.4,112.6Z" fill="#f0e4e4"/><circle cx="1523.3" cy="106.4" r="4.4" fill="#e86a6a" stroke="#dc3c3c" stroke-width="0.9"/><circle cx="1523.3" cy="106.4" r="2.4" fill="none" stroke="#f8d0d0" stroke-width="0.9"/><circle cx="1523" cy="106.2" r="1.1" fill="#d01010"/>
<rect x="1502.2" y="118.2" width="9.2" height="9.2" rx="1.4" fill="#f4dcdc" stroke="#d43030" stroke-width="1.1"/><rect x="1504.2" y="120.2" width="5.2" height="5.2" fill="none" stroke="#dc5050" stroke-width="0.8"/><circle cx="1510.6" cy="119.7" r="4.4" fill="#d40a0a" fill-opacity="0.92"/><path d="M1504.6,122 L1508.6,125.2 L1504.6,125.2Z" fill="#fff"/>
<path d="M1505.6,111 C1504.6,107.4 1506.8,105.4 1510.4,105.6" fill="none" stroke="#5e5e5e" stroke-width="2.2" stroke-linecap="round"/><path d="M1505.6,110.4 C1505,107.6 1507,106.2 1509.8,106.2" fill="none" stroke="#9a9a9a" stroke-width="0.8"/>
<path d="M1523.4,119.4 C1524.4,122.6 1522.4,124.6 1518.6,124.2" fill="none" stroke="#5e5e5e" stroke-width="2.2" stroke-linecap="round"/><path d="M1523,119.8 C1523.6,122.2 1521.8,123.6 1519.4,123.4" fill="none" stroke="#9a9a9a" stroke-width="0.8"/><g font-size="10" font-weight="bold" fill="#4458c8" text-anchor="middle"><text x="20.4" y="150">D</text><text x="20.4" y="159.4">O</text><text x="20.4" y="168.8">F</text></g>
<path d="M26,149.1 H31 V147.4 L35.8,150.6 L31,153.8 V152.1 H26Z" fill="#e01818" stroke="#6e0000" stroke-width="0.7"/>
<path d="M26,158.3 H31 V156.6 L35.8,159.8 L31,163.0 V161.3 H26Z" fill="#e01818" stroke="#6e0000" stroke-width="0.7"/>
<path d="M39.5,147.2 V164.7" fill="none" stroke="#3c3c3c" stroke-width="3.6" stroke-linecap="round"/><path d="M39.5,147.2 V164.7" fill="none" stroke="#f4f4f4" stroke-width="2.1" stroke-linecap="round"/>
<circle cx="39.5" cy="147.2" r="4.4" fill="url(#gGreen)" stroke="#1d6a04" stroke-width="0.8"/><circle cx="38.2" cy="145.7" r="1.8" fill="#fff" fill-opacity="0.28"/>
<circle cx="39.5" cy="164.7" r="4.4" fill="url(#gGreen)" stroke="#1d6a04" stroke-width="0.8"/><circle cx="38.2" cy="163.2" r="1.8" fill="#fff" fill-opacity="0.28"/>
<path d="M59.2,147 Q53,156 59.2,165" fill="none" stroke="#9a9a9a" stroke-width="3.2" stroke-linecap="round"/><path d="M59.2,147 Q53,156 59.2,165" fill="none" stroke="#e6e6e6" stroke-width="1.7" stroke-linecap="round"/>
<path d="M76.3,147 V165" fill="none" stroke="#9a9a9a" stroke-width="3.2" stroke-linecap="round"/><path d="M76.3,147 V165" fill="none" stroke="#e6e6e6" stroke-width="1.7" stroke-linecap="round"/>
<path d="M63.6,151.2 L67.6,147.8 V149.7 H71.6 V152.7 H67.6 V154.6Z" fill="#9c9c9c" stroke="#888" stroke-width="0.5"/>
<path d="M63.6,160.4 L67.6,157.0 V158.9 H71.6 V161.9 H67.6 V163.8Z" fill="#9c9c9c" stroke="#888" stroke-width="0.5"/>
<circle cx="59.2" cy="147.0" r="4.4" fill="#b9b9b9" stroke="#8d8d8d" stroke-width="0.7"/>
<circle cx="59.2" cy="165.0" r="4.4" fill="#b9b9b9" stroke="#8d8d8d" stroke-width="0.7"/>
<circle cx="76.3" cy="147.0" r="4.4" fill="#b9b9b9" stroke="#8d8d8d" stroke-width="0.7"/>
<circle cx="76.3" cy="165.0" r="4.4" fill="#b9b9b9" stroke="#8d8d8d" stroke-width="0.7"/>
<path d="M96.7,147 Q90.6,156 96.7,165" fill="none" stroke="#9a9a9a" stroke-width="3.2" stroke-linecap="round"/><path d="M96.7,147 Q90.6,156 96.7,165" fill="none" stroke="#e6e6e6" stroke-width="1.7" stroke-linecap="round"/>
<path d="M113.7,147 V160" fill="none" stroke="#9a9a9a" stroke-width="3.2" stroke-linecap="round"/><path d="M113.7,147 V160" fill="none" stroke="#e6e6e6" stroke-width="1.7" stroke-linecap="round"/>
<path d="M101.0,153.6 L105.0,150.2 V152.1 H109.6 V155.1 H105.0 V157.0Z" fill="#9c9c9c" stroke="#888" stroke-width="0.5"/>
<circle cx="96.7" cy="147.0" r="4.4" fill="#b9b9b9" stroke="#8d8d8d" stroke-width="0.7"/>
<circle cx="96.7" cy="165.0" r="4.4" fill="#969696" stroke="#8d8d8d" stroke-width="0.7"/>
<circle cx="113.7" cy="147.0" r="4.4" fill="#b9b9b9" stroke="#8d8d8d" stroke-width="0.7"/>
<circle cx="113.7" cy="160.4" r="4.6" fill="#969696" stroke="#8d8d8d" stroke-width="0.7"/>
<path d="M130.8,146 V166.6" fill="none" stroke="#9a9a9a" stroke-width="3.4" stroke-linecap="round"/><path d="M130.8,146 V166.6" fill="none" stroke="#e6e6e6" stroke-width="1.9" stroke-linecap="round"/>
<circle cx="130.8" cy="145.6" r="2.9" fill="#9e9e9e" stroke="#8d8d8d" stroke-width="0.7"/>
<circle cx="130.8" cy="167.0" r="2.9" fill="#9e9e9e" stroke="#8d8d8d" stroke-width="0.7"/>
<line x1="136.0" y1="149.4" x2="136.0" y2="163.4" stroke="#a6a6a6" stroke-width="3.2"/>
<line x1="140.0" y1="153.6" x2="150.4" y2="144.0" stroke="#a6a6a6" stroke-width="2.8"/>
<line x1="145.0" y1="157.0" x2="153.4" y2="149.0" stroke="#a6a6a6" stroke-width="2.8"/>
<path d="M140,157.4 L147,162 L140,168.4 L140,165 L143.4,162 L140,160Z M154.6,156.6 L148,161.6 L154.6,167.4 L154.6,164.2 L151.6,161.6 L154.6,159.6Z" fill="#a9a9a9"/>
<path d="M168,145.6 V166.6" fill="none" stroke="#9a9a9a" stroke-width="3.4" stroke-linecap="round"/><path d="M168,145.6 V166.6" fill="none" stroke="#e6e6e6" stroke-width="1.9" stroke-linecap="round"/>
<circle cx="168.0" cy="145.2" r="2.9" fill="#9e9e9e" stroke="#8d8d8d" stroke-width="0.7"/>
<circle cx="168.0" cy="167.0" r="2.9" fill="#9e9e9e" stroke="#8d8d8d" stroke-width="0.7"/>
<path d="M190,145.6 V166.6" fill="none" stroke="#9a9a9a" stroke-width="3.4" stroke-linecap="round"/><path d="M190,145.6 V166.6" fill="none" stroke="#e6e6e6" stroke-width="1.9" stroke-linecap="round"/>
<circle cx="190.0" cy="145.2" r="2.9" fill="#9e9e9e" stroke="#8d8d8d" stroke-width="0.7"/>
<circle cx="190.0" cy="167.0" r="2.9" fill="#9e9e9e" stroke="#8d8d8d" stroke-width="0.7"/>
<line x1="172.4" y1="153.0" x2="183.0" y2="143.6" stroke="#a6a6a6" stroke-width="3.0"/>
<line x1="175.0" y1="157.2" x2="184.4" y2="148.8" stroke="#a6a6a6" stroke-width="3.0"/>
<line x1="184.4" y1="154.0" x2="184.4" y2="169.0" stroke="#a6a6a6" stroke-width="3.4"/>
<g fill="#86d222" stroke="#e8902c" stroke-width="0.8"><rect x="204.6" y="149.8" width="3.2" height="14"/><path d="M214.0,152.6 L224.2,143.4 L226.2,145.6 L216.0,154.8Z"/><path d="M218.2,156.4 L227.0,148.6 L229.0,150.8 L220.2,158.6Z"/><path d="M211.0,157.8 L218.2,162.6 L211.0,168.8 L211.0,165.6 L214.8,162.6 L211.0,160.4Z"/><path d="M227.8,156.8 L220.6,161.8 L227.8,168 L227.8,164.8 L224.2,161.8 L227.8,159.8Z"/></g>
<circle cx="210.2" cy="149.8" r="6.4" fill="#1f86d8" stroke="#0d3f78" stroke-width="0.9"/><rect x="209.3" y="145.4" width="1.9" height="5.4" fill="#0a1a30"/><rect x="209.3" y="152.2" width="1.9" height="1.9" fill="#0a1a30"/>
<g fill="#86d222" stroke="#d02a1c" stroke-width="0.8"><rect x="241.4" y="149.8" width="3.2" height="14"/><path d="M250.8,152.6 L261.0,143.4 L263.0,145.6 L252.8,154.8Z"/><path d="M255.0,156.4 L263.8,148.6 L265.8,150.8 L257.0,158.6Z"/><path d="M247.8,157.8 L255.0,162.6 L247.8,168.8 L247.8,165.6 L251.6,162.6 L247.8,160.4Z"/><path d="M264.6,156.8 L257.4,161.8 L264.6,168 L264.6,164.8 L261.0,161.8 L264.6,159.8Z"/></g>
<path d="M242.6,143.2 L250.4,143.2 L247.4,148 L253.4,148 L255.8,159.6 L249,152.2 L244,152.2 L246.6,147.6 L241.4,147.6Z" fill="#1f86d8" stroke="#0a2a50" stroke-width="0.8"/><path d="M249,152.2 L255.8,159.6 L253.4,151.4Z" fill="#0a1a30"/>
<g transform="rotate(-38 290.3 155.5)"><ellipse cx="290.3" cy="155.5" rx="14" ry="7.6" fill="#e4e4e4" stroke="#8c8c8c" stroke-width="1"/><ellipse cx="290.3" cy="155.5" rx="11.4" ry="5.2" fill="none" stroke="#a4a4a4" stroke-width="0.9"/><path d="M277.4,155.5 H303.2 M290.3,148.6 V162.4" stroke="#8c8c8c" stroke-width="3.4"/><path d="M277.4,155.5 H303.2 M290.3,148.6 V162.4" stroke="#cfcfcf" stroke-width="1.6"/><circle cx="290.3" cy="155.5" r="2.6" fill="#b4b4b4" stroke="#8c8c8c" stroke-width="0.6"/><circle cx="283" cy="155.5" r="2" fill="#b4b4b4"/><circle cx="297.6" cy="155.5" r="2" fill="#b4b4b4"/></g>
<path d="M319.8,146 Q313.6,155.4 319.8,164.7" fill="none" stroke="#9a9a9a" stroke-width="3.2" stroke-linecap="round"/><path d="M319.8,146 Q313.6,155.4 319.8,164.7" fill="none" stroke="#e6e6e6" stroke-width="1.7" stroke-linecap="round"/>
<path d="M337.3,146 Q343.5,155.4 337.3,164.7" fill="none" stroke="#9a9a9a" stroke-width="3.2" stroke-linecap="round"/><path d="M337.3,146 Q343.5,155.4 337.3,164.7" fill="none" stroke="#e6e6e6" stroke-width="1.7" stroke-linecap="round"/>
<path d="M328.6,150 V161.2" fill="none" stroke="#9a9a9a" stroke-width="3.0" stroke-linecap="round"/><path d="M328.6,150 V161.2" fill="none" stroke="#e6e6e6" stroke-width="1.5" stroke-linecap="round"/>
<circle cx="328.6" cy="149.6" r="2.5" fill="#9e9e9e" stroke="#8d8d8d" stroke-width="0.7"/>
<circle cx="328.6" cy="161.6" r="2.5" fill="#9e9e9e" stroke="#8d8d8d" stroke-width="0.7"/>
<circle cx="319.8" cy="146.0" r="4.6" fill="#a4a4a4" stroke="#8d8d8d" stroke-width="0.7"/>
<circle cx="319.8" cy="164.7" r="4.6" fill="#a4a4a4" stroke="#8d8d8d" stroke-width="0.7"/>
<circle cx="337.3" cy="146.0" r="4.6" fill="#a4a4a4" stroke="#8d8d8d" stroke-width="0.7"/>
<circle cx="337.3" cy="164.7" r="4.6" fill="#a4a4a4" stroke="#8d8d8d" stroke-width="0.7"/>
<rect x="351.4" y="143.4" width="7" height="2" fill="#9e9e9e"/><rect x="351.4" y="147" width="7" height="2" fill="#9e9e9e"/>
<path d="M363.7,146 Q357.5,155.4 363.7,164.7" fill="none" stroke="#9a9a9a" stroke-width="3.2" stroke-linecap="round"/><path d="M363.7,146 Q357.5,155.4 363.7,164.7" fill="none" stroke="#e6e6e6" stroke-width="1.7" stroke-linecap="round"/>
<path d="M373.2,146 Q367,155.4 373.2,164.7" fill="none" stroke="#9a9a9a" stroke-width="3.2" stroke-linecap="round"/><path d="M373.2,146 Q367,155.4 373.2,164.7" fill="none" stroke="#e6e6e6" stroke-width="1.7" stroke-linecap="round"/>
<circle cx="363.7" cy="146.0" r="4.6" fill="#a4a4a4" stroke="#8d8d8d" stroke-width="0.7"/>
<circle cx="363.7" cy="164.7" r="4.6" fill="#a4a4a4" stroke="#8d8d8d" stroke-width="0.7"/>
<circle cx="373.2" cy="146.0" r="4.6" fill="#a4a4a4" stroke="#8d8d8d" stroke-width="0.7"/>
<circle cx="373.2" cy="164.7" r="4.6" fill="#a4a4a4" stroke="#8d8d8d" stroke-width="0.7"/>
<path d="M405.7,155.0 V168.0" fill="none" stroke="#9a9a9a" stroke-width="3.0" stroke-linecap="round"/><path d="M405.7,155.0 V168.0" fill="none" stroke="#e6e6e6" stroke-width="1.5" stroke-linecap="round"/>
<circle cx="405.7" cy="155.0" r="2.5" fill="#9e9e9e" stroke="#8d8d8d" stroke-width="0.7"/>
<circle cx="405.7" cy="168.0" r="2.5" fill="#9e9e9e" stroke="#8d8d8d" stroke-width="0.7"/>
<path d="M413.2,151.6 V164.0" fill="none" stroke="#9a9a9a" stroke-width="3.0" stroke-linecap="round"/><path d="M413.2,151.6 V164.0" fill="none" stroke="#e6e6e6" stroke-width="1.5" stroke-linecap="round"/>
<circle cx="413.2" cy="151.6" r="2.5" fill="#9e9e9e" stroke="#8d8d8d" stroke-width="0.7"/>
<circle cx="413.2" cy="164.0" r="2.5" fill="#9e9e9e" stroke="#8d8d8d" stroke-width="0.7"/>
<path d="M420.7,148.0 V160.0" fill="none" stroke="#9a9a9a" stroke-width="3.0" stroke-linecap="round"/><path d="M420.7,148.0 V160.0" fill="none" stroke="#e6e6e6" stroke-width="1.5" stroke-linecap="round"/>
<circle cx="420.7" cy="148.0" r="2.5" fill="#9e9e9e" stroke="#8d8d8d" stroke-width="0.7"/>
<circle cx="420.7" cy="160.0" r="2.5" fill="#9e9e9e" stroke="#8d8d8d" stroke-width="0.7"/>
<path d="M427.7,144.4 V156.0" fill="none" stroke="#9a9a9a" stroke-width="3.0" stroke-linecap="round"/><path d="M427.7,144.4 V156.0" fill="none" stroke="#e6e6e6" stroke-width="1.5" stroke-linecap="round"/>
<circle cx="427.7" cy="144.4" r="2.5" fill="#9e9e9e" stroke="#8d8d8d" stroke-width="0.7"/>
<circle cx="427.7" cy="156.0" r="2.5" fill="#9e9e9e" stroke="#8d8d8d" stroke-width="0.7"/>
<path d="M441,146.4 L444.2,143.4 L448.4,147.8 L452.6,143.4 L455.8,146.4 L451.4,150.6 L455.8,154.6 L452.6,157.6 L448.4,153.4 L444.2,157.6 L441,154.6 L445.4,150.6Z" fill="#e01818" stroke="#8e0000" stroke-width="0.7"/>
<g fill="#58b81e" stroke="#2a7a0a" stroke-width="0.6"><rect x="454.2" y="158.6" width="2" height="8.4"/><path d="M457.6,158.4 L463,152.6 L464.4,153.8 L459,159.6Z M460.4,160.4 L465,155.6 L466.4,156.8 L461.8,161.6Z"/><path d="M458,161.6 L462,164.2 L458,167.6 L458,165.8 L460,164.2 L458,163Z M467.4,161.4 L463.2,164.2 L467.4,167.8 L467.4,166 L465.4,164.2 L467.4,163Z"/></g>
<path d="M497.7,148.8 L515.5,145.5 L513.8,163 L495.5,165.5Z" fill="none" stroke="#2a7a0a" stroke-width="4.2" stroke-linejoin="round"/><path d="M497.7,148.8 L515.5,145.5 L513.8,163 L495.5,165.5Z" fill="none" stroke="#6cc828" stroke-width="2.6" stroke-linejoin="round"/>
<rect x="497.4" y="150.2" width="16.4" height="10.8" rx="3.6" transform="rotate(-36 505.6 155.6)" fill="#f6f6f6" stroke="#555" stroke-width="0.9"/><rect x="499.8" y="152.6" width="11.6" height="6" rx="2" transform="rotate(-36 505.6 155.6)" fill="none" stroke="#777" stroke-width="0.8"/>
<circle cx="497.7" cy="148.8" r="3.1" fill="url(#gRed)" stroke="#6a0000" stroke-width="0.8"/><circle cx="496.8" cy="147.7" r="1.2" fill="#fff" fill-opacity="0.28"/>
<circle cx="515.5" cy="145.5" r="3.1" fill="url(#gRed)" stroke="#6a0000" stroke-width="0.8"/><circle cx="514.6" cy="144.4" r="1.2" fill="#fff" fill-opacity="0.28"/>
<circle cx="495.5" cy="165.5" r="3.1" fill="url(#gRed)" stroke="#6a0000" stroke-width="0.8"/><circle cx="494.6" cy="164.4" r="1.2" fill="#fff" fill-opacity="0.28"/>
<circle cx="513.8" cy="163.0" r="3.1" fill="url(#gRed)" stroke="#6a0000" stroke-width="0.8"/><circle cx="512.9" cy="161.9" r="1.2" fill="#fff" fill-opacity="0.28"/>
<circle cx="555.6" cy="156" r="10" fill="none" stroke="#a2a2a2" stroke-width="3.6" stroke-dasharray="4.2,4.8" stroke-linecap="round" transform="rotate(20 555.6 156)"/><circle cx="555.6" cy="156" r="10" fill="none" stroke="#f4f4f4" stroke-width="2.1" stroke-dasharray="4.2,4.8" stroke-linecap="round" transform="rotate(20 555.6 156)"/>
<path d="M553,145.6 Q566,144 567.6,159" fill="none" stroke="#b0b0b0" stroke-width="0.9"/>
<circle cx="553.0" cy="145.6" r="2.4" fill="#a4a4a4" stroke="#8d8d8d" stroke-width="0.7"/>
<circle cx="562.4" cy="144.6" r="2.4" fill="#a4a4a4" stroke="#8d8d8d" stroke-width="0.7"/>
<circle cx="567.6" cy="149.6" r="2.4" fill="#a4a4a4" stroke="#8d8d8d" stroke-width="0.7"/>
<circle cx="566.6" cy="159.4" r="2.4" fill="#a4a4a4" stroke="#8d8d8d" stroke-width="0.7"/>
<g fill="#ababab" stroke="#979797" stroke-width="0.6"><rect x="585.6" y="142.6" width="2.6" height="19.8" rx="1"/><rect x="593.7" y="142.6" width="2.6" height="19.8" rx="1"/><rect x="581.4" y="148.3" width="17.4" height="2.6" rx="1"/><rect x="581.4" y="154.7" width="17.4" height="2.6" rx="1"/></g><path d="M593.6,166.4 C593.8,159.6 602.4,161.4 605.0,153.4" fill="none" stroke="#9a9a9a" stroke-width="2"/><path d="M593.6,166.4 C593.8,159.6 602.4,161.4 605.0,153.4" fill="none" stroke="#ececec" stroke-width="0.9"/><circle cx="605.0" cy="153.2" r="2.4" fill="#a0a0a0" stroke="#8d8d8d" stroke-width="0.7"/><circle cx="605.0" cy="163.0" r="2.4" fill="#a0a0a0" stroke="#8d8d8d" stroke-width="0.7"/><circle cx="593.6" cy="166.4" r="2.4" fill="#a0a0a0" stroke="#8d8d8d" stroke-width="0.7"/>
<g fill="#ababab" stroke="#979797" stroke-width="0.6"><rect x="622.4" y="142.6" width="2.6" height="19.8" rx="1"/><rect x="630.5" y="142.6" width="2.6" height="19.8" rx="1"/><rect x="618.2" y="148.3" width="17.4" height="2.6" rx="1"/><rect x="618.2" y="154.7" width="17.4" height="2.6" rx="1"/></g><path d="M630.4,166.4 C630.6,159.6 639.2,161.4 641.8,153.4" fill="none" stroke="#9a9a9a" stroke-width="2"/><path d="M630.4,166.4 C630.6,159.6 639.2,161.4 641.8,153.4" fill="none" stroke="#ececec" stroke-width="0.9"/><circle cx="641.8" cy="153.2" r="2.4" fill="#a0a0a0" stroke="#8d8d8d" stroke-width="0.7"/><circle cx="641.8" cy="163.0" r="2.4" fill="#a0a0a0" stroke="#8d8d8d" stroke-width="0.7"/><circle cx="630.4" cy="166.4" r="2.4" fill="#a0a0a0" stroke="#8d8d8d" stroke-width="0.7"/>
<g fill="#6ccc24" stroke="#2a7a0a" stroke-width="0.6"><rect x="660.0" y="142.6" width="2.6" height="19.8" rx="1"/><rect x="668.1" y="142.6" width="2.6" height="19.8" rx="1"/><rect x="655.8" y="148.3" width="17.4" height="2.6" rx="1"/><rect x="655.8" y="154.7" width="17.4" height="2.6" rx="1"/></g><rect x="655.6" y="147.6" width="13.4" height="4" fill="#5a94d8" stroke="#1c4a8c" stroke-width="0.7"/><path d="M668.0,166.4 C668.2,159.6 676.8,161.4 679.4,153.4" fill="none" stroke="#666" stroke-width="2"/><path d="M668.0,166.4 C668.2,159.6 676.8,161.4 679.4,153.4" fill="none" stroke="#ececec" stroke-width="0.9"/><circle cx="679.4" cy="153.2" r="2.4" fill="url(#gRed)" stroke="#6a0000" stroke-width="0.8"/><circle cx="678.7" cy="152.4" r="1.0" fill="#fff" fill-opacity="0.28"/><circle cx="679.4" cy="163.0" r="2.4" fill="url(#gRed)" stroke="#6a0000" stroke-width="0.8"/><circle cx="678.7" cy="162.2" r="1.0" fill="#fff" fill-opacity="0.28"/><circle cx="668.0" cy="166.4" r="2.4" fill="url(#gRed)" stroke="#6a0000" stroke-width="0.8"/><circle cx="667.3" cy="165.6" r="1.0" fill="#fff" fill-opacity="0.28"/><circle cx="674.6" cy="158.9" r="2" fill="#a8b820" stroke="#5a6a08" stroke-width="0.5"/>
<rect x="1262.2" y="94.9" width="39.6" height="41.4" fill="none" stroke="#ff8426" stroke-width="3.6"/>
<rect x="1307" y="94.9" width="27" height="41.4" fill="none" stroke="#ff8426" stroke-width="3.6"/></svg></div>
<div id="left">
<div class="abs" style="left:1px;top:1px;width:320px;height:22px;background:#dedede;border:1px solid #c3c3c3"></div>
<div class="t" style="left:6.00px;top:7.05px;font-size:14.00px;line-height:14.00px;color:#000;letter-spacing:0.139px;">Combo View</div>
<svg class="abs" style="left:304px;top:7px" width="12" height="12" fill="none" stroke="#2a2a2a"><rect x="3" y="0.7" width="6.2" height="6" /><line x1="2.5" y1="1.4" x2="9.7" y2="1.4" stroke-width="1.8"/><rect x="0.5" y="4.2" width="6.2" height="6" fill="#dedede"/><line x1="0" y1="4.9" x2="7.2" y2="4.9" stroke-width="1.8"/></svg>
<div class="abs" style="left:2px;top:29px;width:60px;height:26px;background:#f0f0f0;border:1px solid #d9d9d9;border-bottom:none"></div>
<div class="abs" style="left:62px;top:26px;width:88px;height:30px;background:#fff;border:1px solid #d9d9d9;border-bottom:none"></div>
<div class="t" style="left:14.20px;top:35.75px;font-size:13.60px;line-height:13.60px;color:#000;letter-spacing:-0.488px;">Model</div>
<div class="t" style="left:102.60px;top:34.75px;font-size:13.60px;line-height:13.60px;color:#000;letter-spacing:-0.433px;">Tasks</div>
<svg class="abs" style="left:77px;top:29px" width="22" height="20" viewBox="0 0 22 20"><path d="M2.2,4.8 L6.2,1.2 L17,12.6 L13.2,16.2Z" fill="#274a7d" stroke="#16315a" stroke-width="0.8"/><path d="M4.2,3 L15,14.4" stroke="#5d86bd" stroke-width="1.1"/><path d="M13.2,16.2 L17,12.6 L19.6,18.6Z" fill="#e8d8b8" stroke="#555" stroke-width="0.6"/><path d="M17.8,16.6 L18.7,15.8 L19.6,18.6Z" fill="#222"/></svg>
<div class="abs" style="left:1px;top:54px;width:320px;height:549px;background:#fff;border:1px solid #dcdcdc"></div>
<div class="abs" style="left:2px;top:56px;width:316px;height:544px;border:1px solid #aeb2bb;border-top-color:#fff"></div>
<div class="abs" style="left:4px;top:57px;width:292px;height:542px;background:linear-gradient(to bottom,#aaabc4 0px,#343366 434px,#343366 100%)"></div>
<div class="abs" style="left:296px;top:57px;width:21px;height:542px;background:#f0f0f0"></div>
<div class="abs" style="left:296px;top:78px;width:21px;height:185px;background:#cdcdcd"></div>
<svg class="abs" style="left:296px;top:57px" width="21" height="542" fill="none" stroke="#505050" stroke-width="1.6"><path d="M6,14.5 L10.5,10 L15,14.5"/><path d="M6,528 L10.5,532.5 L15,528"/></svg>
<div class="abs" style="left:106px;top:80px;width:87px;height:25px;background:#e1e1e1;border:1px solid #adadad"></div>
<div class="t" style="left:133.60px;top:85.75px;font-size:13.60px;line-height:13.60px;color:#000;letter-spacing:-0.634px;">Close</div>
<div class="abs" style="left:14px;top:126px;width:272px;height:167px;background:#d5ddf6;border:1px solid #fff;border-radius:5px 5px 0 0"></div>
<div class="abs" style="left:14px;top:126px;width:272px;height:30px;background:linear-gradient(to right,#fff 0%,#f4f6fd 30%,#cfd9f6 85%,#cbd6f5 100%);border:1px solid #fff;border-bottom:1px solid #fff;border-radius:5px 5px 0 0"></div>
<svg class="abs" style="left:22px;top:130px" width="18" height="20" viewBox="0 0 18 20"><rect x="1.5" y="2.5" width="13.5" height="16" fill="#efefef" stroke="#b9b9b9"/><rect x="2.5" y="3.5" width="11.5" height="14" fill="#e4e4e4"/><circle cx="13" cy="4" r="2.6" fill="#f4e64a"/><circle cx="13.2" cy="3.8" r="1.1" fill="#fdf7b0"/></svg>
<div class="t" style="left:42.00px;top:134.05px;font-size:14.00px;line-height:14.00px;color:#2355c9;letter-spacing:-0.280px;font-weight:bold;">Solver messages</div>
<svg class="abs" style="left:262px;top:131.2px" width="20" height="20" viewBox="0 0 20 20"><circle cx="10" cy="10" r="8.4" fill="#fdfdff" stroke="#c3c9de" stroke-width="1"/><path d="M6.6,9.6 L10,6.2 L13.4,9.6 M6.6,13.8 L10,10.4 L13.4,13.8" fill="none" stroke="#143084" stroke-width="1.7"/></svg>
<div class="abs" style="left:30px;top:172px;width:140.5px;height:16px;background:#eaeaea"></div>
<div class="t" style="left:30.20px;top:172.75px;font-size:13.60px;line-height:13.60px;color:#1f9a2f;letter-spacing:-0.262px;">Fully constrained sketch</div>
<div class="abs" style="left:30px;top:196px;width:88px;height:16px;background:#eaeaea"></div>
<div class="t" style="left:30.20px;top:196.75px;font-size:13.60px;line-height:13.60px;color:#1f9a2f;letter-spacing:-0.349px;">Solved in 0 sec</div>
<div class="abs" style="left:30px;top:222.0px;width:16px;height:16px;background:#fff;border:1px solid #444"></div>
<div class="t" style="left:51.80px;top:224.75px;font-size:13.60px;line-height:13.60px;color:#000;letter-spacing:-0.215px;">Auto remove redundants</div>
<div class="abs" style="left:30px;top:253.0px;width:16px;height:16px;background:#fff;border:1px solid #444"></div>
<div class="t" style="left:51.80px;top:255.75px;font-size:13.60px;line-height:13.60px;color:#000;letter-spacing:-0.213px;">Auto update</div>
<div class="abs" style="left:154px;top:249px;width:114px;height:26px;background:#e1e1e1;border:1px solid #adadad"></div>
<div class="t" style="left:190.40px;top:255.75px;font-size:13.60px;line-height:13.60px;color:#000;letter-spacing:-0.342px;">Update</div>
<div class="abs" style="left:14px;top:302px;width:272px;height:298px;background:#d5ddf6;border:1px solid #fff;border-radius:5px 5px 0 0"></div>
<div class="abs" style="left:14px;top:302px;width:272px;height:30px;background:linear-gradient(to right,#fff 0%,#f4f6fd 30%,#cfd9f6 85%,#cbd6f5 100%);border:1px solid #fff;border-bottom:1px solid #fff;border-radius:5px 5px 0 0"></div>
<svg class="abs" style="left:22px;top:306px" width="18" height="20" viewBox="0 0 18 20"><rect x="1.5" y="2.5" width="13.5" height="16" fill="#efefef" stroke="#b9b9b9"/><rect x="2.5" y="3.5" width="11.5" height="14" fill="#e4e4e4"/><circle cx="13" cy="4" r="2.6" fill="#f4e64a"/><circle cx="13.2" cy="3.8" r="1.1" fill="#fdf7b0"/></svg>
<div class="t" style="left:42.50px;top:310.05px;font-size:14.00px;line-height:14.00px;color:#2355c9;letter-spacing:-0.189px;font-weight:bold;">Edit controls</div>
<svg class="abs" style="left:262px;top:307.2px" width="20" height="20" viewBox="0 0 20 20"><circle cx="10" cy="10" r="8.4" fill="#fdfdff" stroke="#c3c9de" stroke-width="1"/><path d="M6.6,9.6 L10,6.2 L13.4,9.6 M6.6,13.8 L10,10.4 L13.4,13.8" fill="none" stroke="#143084" stroke-width="1.7"/></svg>
<div class="abs" style="left:30px;top:350.0px;width:16px;height:16px;background:#fff;border:1px solid #444"></div>
<div class="t" style="left:51.60px;top:352.75px;font-size:13.60px;line-height:13.60px;color:#000;letter-spacing:-0.320px;">Show grid</div>
<div class="t" style="left:29.90px;top:383.75px;font-size:13.60px;line-height:13.60px;color:#8c8c8c;letter-spacing:-0.383px;">Grid size:</div>
<div class="abs" style="left:153px;top:376px;width:116px;height:27px;background:#f0f0f0;border:1px solid #d2d2d2"></div>
<div class="t" style="left:157.80px;top:384.75px;font-size:13.60px;line-height:13.60px;color:#8c8c8c;letter-spacing:-0.296px;">10.00 mm</div>
<svg class="abs" style="left:249px;top:377px" width="19" height="25"><rect x="0.5" y="1.5" width="17.5" height="10.5" fill="#f2f2f2" stroke="#dcdcdc"/><rect x="0.5" y="13.5" width="17.5" height="10.5" fill="#f2f2f2" stroke="#dcdcdc"/><polygon points="5.5,8.6 9.5,4.6 13.5,8.6" fill="#444"/><polygon points="5.5,16.4 9.5,20.4 13.5,16.4" fill="#444"/></svg>
<div class="abs" style="left:30px;top:412.0px;width:16px;height:16px;background:#fff;border:1px solid #cfcfcf"></div>
<div class="t" style="left:51.60px;top:414.75px;font-size:13.60px;line-height:13.60px;color:#8c8c8c;letter-spacing:-0.407px;">Grid snap</div>
<div class="abs" style="left:30px;top:441.0px;width:16px;height:16px;background:#fff;border:1px solid #444"></div><svg class="abs" style="left:30px;top:441.0px" width="16" height="16"><path d="M3.6,8.2 L6.6,11.2 L12.6,4.6" fill="none" stroke="#222" stroke-width="1.3"/></svg>
<div class="t" style="left:51.80px;top:442.75px;font-size:13.60px;line-height:13.60px;color:#000;letter-spacing:-0.213px;">Auto constraints</div>
<div class="abs" style="left:30px;top:470.0px;width:16px;height:16px;background:#fff;border:1px solid #444"></div><svg class="abs" style="left:30px;top:470.0px" width="16" height="16"><path d="M3.6,8.2 L6.6,11.2 L12.6,4.6" fill="none" stroke="#222" stroke-width="1.3"/></svg>
<div class="t" style="left:51.80px;top:472.75px;font-size:13.60px;line-height:13.60px;color:#000;letter-spacing:-0.190px;">Avoid redundant auto constraints</div>
<div class="t" style="left:29.60px;top:498.75px;font-size:13.60px;line-height:13.60px;color:#000;letter-spacing:-0.168px;">Rendering order (global):</div>
<div class="abs" style="left:30px;top:521px;width:239px;height:78px;background:#fff;border:1px solid #8f95a8;border-right-color:#e3e7f6;border-bottom:none"></div>
<div class="t" style="left:36.30px;top:528.75px;font-size:13.60px;line-height:13.60px;color:#000;letter-spacing:0.426px;">Normal Geometry</div>
<div class="t" style="left:36.30px;top:549.75px;font-size:13.60px;line-height:13.60px;color:#000;letter-spacing:0.365px;">Construction Geometry</div>
<div class="t" style="left:36.30px;top:571.75px;font-size:13.60px;line-height:13.60px;color:#000;letter-spacing:0.143px;">External Geometry</div>
<div class="abs" style="left:4px;top:599px;width:313px;height:1px;background:#b2b6c0"></div>
<div class="abs" style="left:0;top:600px;width:323px;height:3px;background:#fff"></div>
<div class="abs" style="left:0;top:603px;width:323px;height:4px;background:#e6e6e6"></div>
</div>
<div id="viewport">
<svg class="abs" style="left:0;top:0" width="1209" height="576" viewBox="327 176 1209 576">
<!-- axes -->
<rect x="327" y="287.2" width="155" height="1.6" fill="#cc6666"/>
<rect x="1229" y="287.2" width="307" height="1.6" fill="#cc6666"/>
<rect x="1228.1" y="176" width="1.7" height="112" fill="#6cff7c"/>
<rect x="1228.1" y="658" width="1.7" height="94" fill="#6cff7c"/>
<!-- outer face -->
<rect x="482" y="288" width="747" height="370" fill="#d5d5d5" stroke="#101010" stroke-width="1.7"/>
<!-- inner rect -->
<rect x="510.5" y="316.5" width="690" height="314" fill="none" stroke="#101010" stroke-width="1.7"/>
<rect x="522" y="317" width="677" height="1" fill="#c45aa6"/>
<!-- circle -->
<circle cx="669.7" cy="475.5" r="76.5" fill="none" stroke="#12ea12" stroke-width="2.2"/>
<!-- dimension lines -->
<g stroke="#ff2a00" stroke-width="1.6" fill="none">
<line x1="510.5" y1="237" x2="510.5" y2="316"/>
<line x1="669.7" y1="237" x2="669.7" y2="475"/>
<line x1="517" y1="254.3" x2="557" y2="254.3"/>
<line x1="620" y1="254.3" x2="663" y2="254.3"/>
<line x1="423" y1="315.8" x2="510" y2="315.8"/>
<line x1="423" y1="475.6" x2="669" y2="475.6"/>
<line x1="439.8" y1="322" x2="439.8" y2="376"/>
<line x1="439.8" y1="441" x2="439.8" y2="469"/>
<line x1="669.7" y1="475.6" x2="786" y2="440.8"/>
</g>
<g fill="#ff2a00">
<polygon points="511,254.3 518,250.5 518,258.1"/>
<polygon points="669,254.3 662,250.5 662,258.1"/>
<polygon points="439.8,316.5 436,323.5 443.6,323.5"/>
<polygon points="439.8,475 436,468 443.6,468"/>
<polygon points="743.5,453.5 735.2,451.6 737.6,459.6"/>
</g>
<circle cx="669.7" cy="475.6" r="1.6" fill="#12ea12"/>
<rect x="1227" y="286" width="4" height="4" fill="#12ea12"/>
<rect x="1197.5" y="316" width="3" height="3" fill="#12ea12"/>
<rect x="511" y="317" width="2" height="2" fill="#12ea12"/>
<!-- orange selection boxes -->
<rect x="502" y="305" width="19.5" height="20.5" fill="none" stroke="#ff8426" stroke-width="3.6"/>
<rect x="657.2" y="461.8" width="28.8" height="25.4" fill="none" stroke="#ff8426" stroke-width="4"/>
<!-- dimension text -->
<g font-family="Liberation Sans, sans-serif" font-size="13.5" fill="#b6261c">
<text x="589" y="259.5" text-anchor="middle" textLength="52" lengthAdjust="spacingAndGlyphs">10.2 mm</text>
<text transform="translate(446.3,409) rotate(-90)" text-anchor="middle" textLength="52" lengthAdjust="spacingAndGlyphs">10.2 mm</text>
<text transform="translate(791.5,445) rotate(-16.7)" textLength="76" lengthAdjust="spacingAndGlyphs" fill="#b8382c">R4.8825 mm</text>
</g>
<!-- nav cube -->
<g fill="#9c9cbe" fill-opacity="0.92">
<polygon points="1477.7,181.5 1468.6,190.8 1487,190.8"/>
<polygon points="1477.7,286.8 1468.6,277.5 1487,277.5"/>
<polygon points="1425.3,234 1434.6,225.3 1434.6,243"/>
<polygon points="1530.6,234 1521.2,225.3 1521.2,243"/>
<path d="M1462.5,186.5 Q1449,191.5 1443.5,200.5 L1441.2,198.6 L1438.2,209.8 L1450.5,206.5 L1447.8,204.2 Q1452.5,197 1464.2,192.4 Z"/>
<path d="M1492.3,186.8 Q1506,191.5 1512,200.8 L1514.3,198.8 L1517.3,210 L1505,206.8 L1507.6,204.4 Q1502.5,197.5 1490.8,192.6 Z"/>
</g>
<path d="M1460,208.5 H1495.4 L1503.6,216.6 V252.4 L1495.4,260.5 H1460 L1451.8,252.4 V216.6Z" fill="#9292b7" stroke="#9292b7" stroke-width="1.4" stroke-linejoin="round"/>
<g fill="#b1b1cf"><ellipse cx="1456" cy="212.6" rx="4.6" ry="2.6" transform="rotate(-45 1456 212.6)"/><ellipse cx="1499.4" cy="212.6" rx="4.6" ry="2.6" transform="rotate(45 1499.4 212.6)"/><ellipse cx="1456" cy="256.4" rx="4.6" ry="2.6" transform="rotate(45 1456 256.4)"/><ellipse cx="1499.4" cy="256.4" rx="4.6" ry="2.6" transform="rotate(-45 1499.4 256.4)"/></g>
<rect x="1457.6" y="213.7" width="40.4" height="41.2" rx="3.2" fill="#b0b0cd"/>
<g fill="#bcbcd6"><circle cx="1462.2" cy="218.4" r="3.3"/><circle cx="1493.4" cy="218.4" r="3.3"/><circle cx="1462.2" cy="250.2" r="3.3"/><circle cx="1493.4" cy="250.2" r="3.3"/></g>
<rect x="1460.2" y="216.2" width="35.4" height="36.2" fill="#cbcbdf" stroke="#d6d6e8" stroke-width="0.7"/>
<g stroke="#4c4c78" stroke-width="0.9" stroke-linecap="round">
<line x1="1457.6" y1="214.2" x2="1459.4" y2="216"/><line x1="1497.8" y1="214.2" x2="1496" y2="216"/>
<line x1="1457.6" y1="254.6" x2="1459.4" y2="252.8"/><line x1="1497.8" y1="254.6" x2="1496" y2="252.8"/>
</g>
<line x1="1448.4" y1="205" x2="1455.8" y2="212.6" stroke="#1414e6" stroke-width="1.5"/>
<rect x="1448" y="203.9" width="43.2" height="1.8" fill="#f40000"/>
<rect x="1447" y="204" width="2.1" height="43.8" fill="#00ea00"/>
<text x="1460.8" y="215.7" font-family="Liberation Sans, sans-serif" font-size="7.4" fill="#8e90f4">Z</text>
<text x="1508.8" y="204.7" font-family="Liberation Sans, sans-serif" font-size="8.2" fill="#c07894">X</text>
<text x="1448.8" y="264.7" font-family="Liberation Sans, sans-serif" font-size="8" fill="#08cc18">Y</text>
<text x="1461.8" y="239.1" font-family="Liberation Sans, sans-serif" font-weight="bold" font-size="11.9" fill="#000" stroke="#000" stroke-width="0.35" textLength="36.4" lengthAdjust="spacingAndGlyphs">BOTTOM</text>
<g>
<polygon points="1496.8,272 1503.5,268.8 1510.6,271.2 1504,274.6" fill="#a2a2c0"/>
<polygon points="1496.8,272 1504,274.6 1504,282.6 1496.8,279.6" fill="#8f8fb2"/>
<polygon points="1504,274.6 1510.6,271.2 1510.6,279.4 1504,282.6" fill="#8585aa"/>
<polygon points="1515.4,272.6 1524.8,272.6 1520.1,277.4" fill="#3f3f68"/>
</g>
<!-- corner axis cross -->
<g stroke-width="1.2">
<line x1="1507" y1="722.6" x2="1526" y2="722.6" stroke="#a02828"/>
<line x1="1507" y1="722.6" x2="1507" y2="742" stroke="#1f8a1f"/>
</g>
<polygon points="1527,722.6 1521,720.6 1521,724.6" fill="#a02828"/>
<polygon points="1507,743 1505,736.5 1509,736.5" fill="#1f8a1f"/>
<rect x="1506" y="721.6" width="2" height="2" fill="#3030b0"/>
<g font-family="Liberation Sans, sans-serif" font-size="7" fill="#303048">
<text x="1509" y="721">Z</text><text x="1528" y="722">X</text><text x="1509.5" y="742.5">Y</text>
</g>
</svg>
</div>
<div id="status">
<div class="t" style="left:3.10px;top:9.85px;font-size:13.40px;line-height:13.40px;color:#111;letter-spacing:-0.474px;">Preselected:</div>
<div class="t" style="left:78.10px;top:9.85px;font-size:13.40px;line-height:13.40px;color:#111;letter-spacing:-0.565px;">Unnamed.</div>
<div class="t" style="left:137.00px;top:9.85px;font-size:13.40px;line-height:13.40px;color:#111;letter-spacing:-0.453px;">Body001.</div>
<div class="t" style="left:191.70px;top:9.85px;font-size:13.40px;line-height:13.40px;color:#111;letter-spacing:-0.414px;">Sketch003.</div>
<div class="t" style="left:256.30px;top:9.85px;font-size:13.40px;line-height:13.40px;color:#111;letter-spacing:-0.366px;">Constraint2</div>
<div class="t" style="left:327.10px;top:9.85px;font-size:13.40px;line-height:13.40px;color:#111;letter-spacing:-0.224px;">(-40.590668</div>
<div class="t" style="left:402.50px;top:9.85px;font-size:13.40px;line-height:13.40px;color:#111;letter-spacing:-0.200px;">mm,-1.751241</div>
<div class="t" style="left:491.70px;top:9.85px;font-size:13.40px;line-height:13.40px;color:#111;letter-spacing:-0.249px;">mm,12.591001</div>
<div class="t" style="left:583.30px;top:9.85px;font-size:13.40px;line-height:13.40px;color:#111;letter-spacing:0.104px;">mm)</div>
<div class="abs" style="left:1285px;top:0;width:1px;height:31px;background:#dcdcdc"></div>
<div class="abs" style="left:1385px;top:0;width:1px;height:31px;background:#dcdcdc"></div>
<svg class="abs" style="left:1301px;top:6px" width="22" height="20" viewBox="1301 789 22 20">
<path d="M1306,805 C1313,806.5 1318,804 1319,799" fill="none" stroke="#8a8a8a" stroke-width="2.2" stroke-linecap="round"/>
<path d="M1318,793 C1311,791.5 1306,794 1305,799" fill="none" stroke="#8a8a8a" stroke-width="2.2" stroke-linecap="round"/>
<circle cx="1317.3" cy="793.2" r="3.3" fill="#2e2e2e"/><circle cx="1306.7" cy="804.6" r="3.3" fill="#2e2e2e"/></svg>
<div class="abs" style="left:1322px;top:8px;width:42.6px;height:20px;overflow:hidden"><div class="t" style="left:2.00px;top:0.75px;font-size:13.60px;line-height:13.60px;color:#000;letter-spacing:-0.911px;">Gesture</div></div>
<div class="dd" style="left:1367.2px;top:13.6px;border-left-width:4px;border-right-width:4px;border-top-width:4.4px"></div>
<div class="t" style="left:1391.20px;top:9.75px;font-size:13.60px;line-height:13.60px;color:#000;letter-spacing:-0.147px;">77.25 mm x 36.79 mm</div>
</div>
<div id="tabs" class="abs" style="left:327px;top:752px;width:1209px;height:31px">
<div class="abs" style="left:3px;top:4px;width:132px;height:22px;border:1px solid #d9d9d9;border-top:none;background:#f0f0f0"></div>
<div class="abs" style="left:135px;top:0;width:163px;height:28px;border:1px solid #d9d9d9;border-top:none;background:#fff"></div>
<svg class="abs" style="left:13px;top:2px" width="20" height="20"><use href="#fc"/></svg>
<div class="t" style="left:37.60px;top:6.75px;font-size:13.60px;line-height:13.60px;color:#000;letter-spacing:-0.155px;">Start page</div>
<svg class="abs" style="left:105px;top:5px" width="16" height="16"><rect x="0.5" y="0.5" width="15" height="15" rx="1.5" fill="#d6d6d6" stroke="#b4b4b4"/><path d="M4.5,4.5 L11.5,11.5 M11.5,4.5 L4.5,11.5" stroke="#fff" stroke-width="2.2"/></svg>
<svg class="abs" style="left:151px;top:4px" width="20" height="20"><use href="#fc"/></svg>
<div class="t" style="left:176.30px;top:8.75px;font-size:13.60px;line-height:13.60px;color:#000;letter-spacing:-0.055px;">Unnamed : 1*</div>
<svg class="abs" style="left:265px;top:6px" width="17" height="17"><rect x="0.5" y="0.5" width="16" height="16" rx="2" fill="#e06040" stroke="#d8863c"/><path d="M5,5 L12,12 M12,5 L5,12" stroke="#fff" stroke-width="2.4"/></svg>
</div>
</body>
</html>
